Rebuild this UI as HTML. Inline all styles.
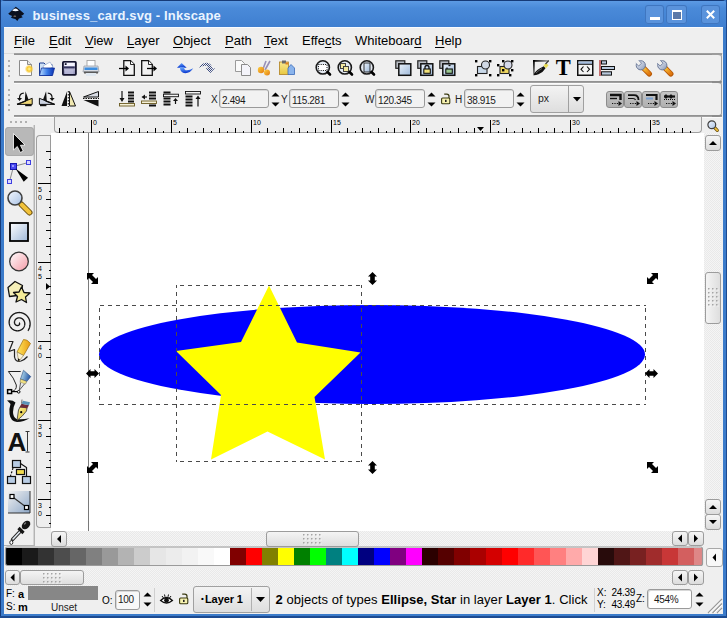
<!DOCTYPE html><html><head><meta charset="utf-8"><style>
html,body{margin:0;padding:0;width:727px;height:618px;overflow:hidden;background:#efefef;}
body{position:relative;font-family:"Liberation Sans",sans-serif;font-size:13px;color:#000;}
.t{position:absolute;white-space:nowrap;line-height:1;}
svg{overflow:visible}
</style></head><body>
<div style="position:absolute;left:0px;top:0px;width:727px;height:618px;background:#3b7bca;"></div>
<div style="position:absolute;left:4px;top:27px;width:719px;height:587px;background:#efefef;"></div>
<div style="position:absolute;left:0px;top:0px;width:727px;height:27px;background:linear-gradient(#163a78 0px,#163a78 1px,#5c9ae4 1px,#4a8ad9 8px,#3f7fd0 27px);border-radius:5px 5px 0 0;"></div>
<div style="position:absolute;left:0px;top:0px;width:1px;height:618px;background:#163a78;"></div>
<div style="position:absolute;left:726px;top:0px;width:1px;height:618px;background:#1c4a90;"></div>
<div style="position:absolute;left:0px;top:616px;width:727px;height:2px;background:#1c4a90;"></div>
<div class="t" style="left:32.5px;top:9px;font-weight:bold;font-size:13px;letter-spacing:0.15px;color:#eaf4ff;">business_card.svg - Inkscape</div>
<div style="position:absolute;left:644.5px;top:4.5px;width:19.5px;height:19.5px;background:#5a93dc;border-radius:3px;box-shadow:inset 0 0 0 1px #3f76c0;"></div>
<div style="position:absolute;left:666px;top:4.5px;width:20.5px;height:19.5px;background:#5a93dc;border-radius:3px;box-shadow:inset 0 0 0 1px #3f76c0;"></div>
<div style="position:absolute;left:700.5px;top:4.5px;width:19.5px;height:19.5px;background:#5a93dc;border-radius:3px;box-shadow:inset 0 0 0 1px #3f76c0;"></div>
<div style="position:absolute;left:650px;top:17px;width:9.5px;height:2.5px;background:#fff;"></div>
<div style="position:absolute;left:672px;top:10px;width:9.5px;height:9.5px;border:1.6px solid #fff;border-top-width:2px;box-sizing:border-box;background:#5a78a8;"></div>
<svg style="position:absolute;left:706px;top:10px;" width="9" height="9" viewBox="0 0 9 9"><path d="M0.8,0.8 L8.2,8.2 M8.2,0.8 L0.8,8.2" stroke="#fff" stroke-width="2"/></svg>
<svg style="position:absolute;left:0px;top:0px;" width="30" height="27" viewBox="0 0 30 27"><path d="M15.8,6.8 Q19,9 22,11.8 L24.2,13.8 Q23,15.3 21.2,15.8 L22.8,17.3 Q20.5,18.2 19,18.6 L17.3,21 L15.3,19 Q13,18.5 10.8,17.5 L12.3,16 Q9.5,15 8.2,13.8 L11,11.3 Q13.5,8.8 15.8,6.8 Z" fill="#0a0f1e"/><path d="M12.2,10.8 Q15.5,6.2 18.8,10.8 Q15.5,11.6 12.2,10.8 Z" fill="#f4f8ff"/><ellipse cx="14.8" cy="16.2" rx="1.4" ry="0.6" fill="#8a7a6a"/></svg>
<div style="position:absolute;left:4px;top:27px;width:719px;height:1px;background:#f8fbff;"></div>
<div class="t" style="left:14px;top:34px;font-size:13px;"><span style="text-decoration:underline;text-underline-offset:1.5px;text-decoration-thickness:1px">F</span>ile</div>
<div class="t" style="left:49px;top:34px;font-size:13px;"><span style="text-decoration:underline;text-underline-offset:1.5px;text-decoration-thickness:1px">E</span>dit</div>
<div class="t" style="left:85px;top:34px;font-size:13px;"><span style="text-decoration:underline;text-underline-offset:1.5px;text-decoration-thickness:1px">V</span>iew</div>
<div class="t" style="left:127px;top:34px;font-size:13px;"><span style="text-decoration:underline;text-underline-offset:1.5px;text-decoration-thickness:1px">L</span>ayer</div>
<div class="t" style="left:173px;top:34px;font-size:13px;"><span style="text-decoration:underline;text-underline-offset:1.5px;text-decoration-thickness:1px">O</span>bject</div>
<div class="t" style="left:225px;top:34px;font-size:13px;"><span style="text-decoration:underline;text-underline-offset:1.5px;text-decoration-thickness:1px">P</span>ath</div>
<div class="t" style="left:264px;top:34px;font-size:13px;"><span style="text-decoration:underline;text-underline-offset:1.5px;text-decoration-thickness:1px">T</span>ext</div>
<div class="t" style="left:302px;top:34px;font-size:13px;">Effe<span style="text-decoration:underline;text-underline-offset:1.5px;text-decoration-thickness:1px">c</span>ts</div>
<div class="t" style="left:355px;top:34px;font-size:13px;">Whiteboar<span style="text-decoration:underline;text-underline-offset:1.5px;text-decoration-thickness:1px">d</span></div>
<div class="t" style="left:435px;top:34px;font-size:13px;"><span style="text-decoration:underline;text-underline-offset:1.5px;text-decoration-thickness:1px">H</span>elp</div>
<div style="position:absolute;left:4px;top:53px;width:719px;height:1px;background:#b4b4b4;"></div>
<div style="position:absolute;left:4px;top:53px;width:719px;height:1px;background:#dcdcdc;"></div>
<div style="position:absolute;left:14px;top:53px;width:708px;height:2px;background:linear-gradient(#a8a8a8,#8a8a8a);"></div>
<div style="position:absolute;left:14px;top:81px;width:708px;height:2px;background:linear-gradient(#8a8a8a,#a8a8a8);"></div>
<div style="position:absolute;left:14px;top:83px;width:708px;height:1px;background:#fbfbfb;"></div>
<div style="position:absolute;left:14px;top:115px;width:708px;height:2px;background:linear-gradient(#8a8a8a,#a8a8a8);"></div>
<div style="position:absolute;left:14px;top:117px;width:708px;height:1px;background:#fbfbfb;"></div>
<div style="position:absolute;left:8px;top:60px;width:2px;height:2px;background:#b0b0b0;"></div>
<div style="position:absolute;left:8px;top:65px;width:2px;height:2px;background:#b0b0b0;"></div>
<div style="position:absolute;left:8px;top:70px;width:2px;height:2px;background:#b0b0b0;"></div>
<div style="position:absolute;left:8px;top:75px;width:2px;height:2px;background:#b0b0b0;"></div>
<div style="position:absolute;left:8px;top:89px;width:2px;height:2px;background:#b0b0b0;"></div>
<div style="position:absolute;left:8px;top:94px;width:2px;height:2px;background:#b0b0b0;"></div>
<div style="position:absolute;left:8px;top:99px;width:2px;height:2px;background:#b0b0b0;"></div>
<div style="position:absolute;left:8px;top:104px;width:2px;height:2px;background:#b0b0b0;"></div>
<div style="position:absolute;left:8px;top:109px;width:2px;height:2px;background:#b0b0b0;"></div>
<div style="position:absolute;left:10px;top:121px;width:2px;height:2px;background:#b0b0b0;"></div>
<div style="position:absolute;left:15px;top:121px;width:2px;height:2px;background:#b0b0b0;"></div>
<div style="position:absolute;left:20px;top:121px;width:2px;height:2px;background:#b0b0b0;"></div>
<div style="position:absolute;left:25px;top:121px;width:2px;height:2px;background:#b0b0b0;"></div>
<div style="position:absolute;left:54px;top:117px;width:648px;height:16px;background:#eeeeee;border:1px solid #a0a0a0;border-top:none;border-radius:0 0 4px 4px;box-sizing:border-box;"></div>
<svg style="position:absolute;left:0;top:0" width="727" height="618" font-family="Liberation Sans"><rect x="59" y="128" width="1" height="5"/><rect x="67" y="131" width="1" height="2"/><rect x="75" y="128" width="1" height="5"/><rect x="83" y="131" width="1" height="2"/><rect x="91" y="120" width="1" height="13"/><text x="93" y="125" font-size="7">0</text><rect x="99" y="131" width="1" height="2"/><rect x="107" y="128" width="1" height="5"/><rect x="115" y="131" width="1" height="2"/><rect x="123" y="128" width="1" height="5"/><rect x="131" y="131" width="1" height="2"/><rect x="139" y="128" width="1" height="5"/><rect x="147" y="131" width="1" height="2"/><rect x="155" y="128" width="1" height="5"/><rect x="163" y="131" width="1" height="2"/><rect x="171" y="120" width="1" height="13"/><text x="173" y="125" font-size="7">5</text><rect x="179" y="131" width="1" height="2"/><rect x="187" y="128" width="1" height="5"/><rect x="195" y="131" width="1" height="2"/><rect x="203" y="128" width="1" height="5"/><rect x="211" y="131" width="1" height="2"/><rect x="219" y="128" width="1" height="5"/><rect x="227" y="131" width="1" height="2"/><rect x="235" y="128" width="1" height="5"/><rect x="243" y="131" width="1" height="2"/><rect x="251" y="120" width="1" height="13"/><text x="253" y="125" font-size="7">10</text><rect x="259" y="131" width="1" height="2"/><rect x="267" y="128" width="1" height="5"/><rect x="275" y="131" width="1" height="2"/><rect x="283" y="128" width="1" height="5"/><rect x="291" y="131" width="1" height="2"/><rect x="299" y="128" width="1" height="5"/><rect x="307" y="131" width="1" height="2"/><rect x="315" y="128" width="1" height="5"/><rect x="323" y="131" width="1" height="2"/><rect x="331" y="120" width="1" height="13"/><text x="333" y="125" font-size="7">15</text><rect x="339" y="131" width="1" height="2"/><rect x="347" y="128" width="1" height="5"/><rect x="355" y="131" width="1" height="2"/><rect x="362" y="128" width="1" height="5"/><rect x="370" y="131" width="1" height="2"/><rect x="378" y="128" width="1" height="5"/><rect x="386" y="131" width="1" height="2"/><rect x="394" y="128" width="1" height="5"/><rect x="402" y="131" width="1" height="2"/><rect x="410" y="120" width="1" height="13"/><text x="412" y="125" font-size="7">20</text><rect x="418" y="131" width="1" height="2"/><rect x="426" y="128" width="1" height="5"/><rect x="434" y="131" width="1" height="2"/><rect x="442" y="128" width="1" height="5"/><rect x="450" y="131" width="1" height="2"/><rect x="458" y="128" width="1" height="5"/><rect x="466" y="131" width="1" height="2"/><rect x="474" y="128" width="1" height="5"/><rect x="482" y="131" width="1" height="2"/><rect x="490" y="120" width="1" height="13"/><text x="492" y="125" font-size="7">25</text><rect x="498" y="131" width="1" height="2"/><rect x="506" y="128" width="1" height="5"/><rect x="514" y="131" width="1" height="2"/><rect x="522" y="128" width="1" height="5"/><rect x="530" y="131" width="1" height="2"/><rect x="538" y="128" width="1" height="5"/><rect x="546" y="131" width="1" height="2"/><rect x="554" y="128" width="1" height="5"/><rect x="562" y="131" width="1" height="2"/><rect x="570" y="120" width="1" height="13"/><text x="572" y="125" font-size="7">30</text><rect x="578" y="131" width="1" height="2"/><rect x="586" y="128" width="1" height="5"/><rect x="594" y="131" width="1" height="2"/><rect x="602" y="128" width="1" height="5"/><rect x="610" y="131" width="1" height="2"/><rect x="618" y="128" width="1" height="5"/><rect x="626" y="131" width="1" height="2"/><rect x="634" y="128" width="1" height="5"/><rect x="642" y="131" width="1" height="2"/><rect x="650" y="120" width="1" height="13"/><text x="652" y="125" font-size="7">35</text><rect x="658" y="131" width="1" height="2"/><rect x="666" y="128" width="1" height="5"/><rect x="674" y="131" width="1" height="2"/><rect x="682" y="128" width="1" height="5"/><rect x="690" y="131" width="1" height="2"/><path d="M477 127 L484 127 L480.5 131 Z"/></svg>
<div style="position:absolute;left:36px;top:135px;width:15px;height:393px;background:#eeeeee;border:1px solid #a0a0a0;border-right:none;border-radius:4px 0 0 4px;box-sizing:border-box;"></div>
<div style="position:absolute;left:50px;top:135px;width:1px;height:393px;background:#9a9a9a;"></div>
<svg style="position:absolute;left:0;top:0" width="727" height="618" font-family="Liberation Sans"><rect x="46" y="151" width="5" height="1"/><rect x="49" y="159" width="2" height="1"/><rect x="46" y="167" width="5" height="1"/><rect x="49" y="175" width="2" height="1"/><rect x="38" y="183" width="13" height="1"/><text x="38" y="192" font-size="7">5</text><text x="38" y="200" font-size="7">0</text><rect x="49" y="191" width="2" height="1"/><rect x="46" y="199" width="5" height="1"/><rect x="49" y="207" width="2" height="1"/><rect x="46" y="215" width="5" height="1"/><rect x="49" y="222" width="2" height="1"/><rect x="46" y="230" width="5" height="1"/><rect x="49" y="238" width="2" height="1"/><rect x="46" y="246" width="5" height="1"/><rect x="49" y="254" width="2" height="1"/><rect x="38" y="262" width="13" height="1"/><text x="38" y="271" font-size="7">4</text><text x="38" y="279" font-size="7">5</text><rect x="49" y="270" width="2" height="1"/><rect x="46" y="278" width="5" height="1"/><rect x="49" y="286" width="2" height="1"/><rect x="46" y="294" width="5" height="1"/><rect x="49" y="302" width="2" height="1"/><rect x="46" y="309" width="5" height="1"/><rect x="49" y="317" width="2" height="1"/><rect x="46" y="325" width="5" height="1"/><rect x="49" y="333" width="2" height="1"/><rect x="38" y="341" width="13" height="1"/><text x="38" y="350" font-size="7">4</text><text x="38" y="358" font-size="7">0</text><rect x="49" y="349" width="2" height="1"/><rect x="46" y="357" width="5" height="1"/><rect x="49" y="365" width="2" height="1"/><rect x="46" y="373" width="5" height="1"/><rect x="49" y="380" width="2" height="1"/><rect x="46" y="388" width="5" height="1"/><rect x="49" y="396" width="2" height="1"/><rect x="46" y="404" width="5" height="1"/><rect x="49" y="412" width="2" height="1"/><rect x="38" y="420" width="13" height="1"/><text x="38" y="429" font-size="7">3</text><text x="38" y="437" font-size="7">5</text><rect x="49" y="428" width="2" height="1"/><rect x="46" y="436" width="5" height="1"/><rect x="49" y="444" width="2" height="1"/><rect x="46" y="452" width="5" height="1"/><rect x="49" y="460" width="2" height="1"/><rect x="46" y="467" width="5" height="1"/><rect x="49" y="475" width="2" height="1"/><rect x="46" y="483" width="5" height="1"/><rect x="49" y="491" width="2" height="1"/><rect x="38" y="499" width="13" height="1"/><text x="38" y="508" font-size="7">3</text><text x="38" y="516" font-size="7">0</text><rect x="49" y="507" width="2" height="1"/><rect x="46" y="515" width="5" height="1"/><rect x="49" y="523" width="2" height="1"/><path d="M46 283 L46 290 L50 286.5 Z"/></svg>
<div style="position:absolute;left:51px;top:133px;width:653px;height:398px;background:#ffffff;"></div>
<div style="position:absolute;left:88px;top:133px;width:1px;height:398px;background:#7a7a7a;"></div>
<svg style="position:absolute;left:0;top:0" width="727" height="618"><ellipse cx="372" cy="354.5" rx="273" ry="49.5" fill="#0000ff"/><path d="M269,285.5 L297,342.5 L360.5,352.5 L314.5,397 L325,459.5 L267.5,431.5 L211,459.5 L221,395 L176,351 L241,342 Z" fill="#ffff00"/><rect x="100" y="305" width="4" height="1" fill="#4a4a4a"/><rect x="108" y="305" width="4" height="1" fill="#4a4a4a"/><rect x="116" y="305" width="4" height="1" fill="#4a4a4a"/><rect x="124" y="305" width="4" height="1" fill="#4a4a4a"/><rect x="132" y="305" width="4" height="1" fill="#4a4a4a"/><rect x="140" y="305" width="4" height="1" fill="#4a4a4a"/><rect x="148" y="305" width="4" height="1" fill="#4a4a4a"/><rect x="156" y="305" width="4" height="1" fill="#4a4a4a"/><rect x="164" y="305" width="4" height="1" fill="#4a4a4a"/><rect x="172" y="305" width="4" height="1" fill="#4a4a4a"/><rect x="180" y="305" width="4" height="1" fill="#4a4a4a"/><rect x="188" y="305" width="4" height="1" fill="#4a4a4a"/><rect x="196" y="305" width="4" height="1" fill="#4a4a4a"/><rect x="204" y="305" width="4" height="1" fill="#4a4a4a"/><rect x="212" y="305" width="4" height="1" fill="#4a4a4a"/><rect x="220" y="305" width="4" height="1" fill="#4a4a4a"/><rect x="228" y="305" width="4" height="1" fill="#4a4a4a"/><rect x="236" y="305" width="4" height="1" fill="#4a4a4a"/><rect x="244" y="305" width="4" height="1" fill="#4a4a4a"/><rect x="252" y="305" width="4" height="1" fill="#4a4a4a"/><rect x="260" y="305" width="4" height="1" fill="#4a4a4a"/><rect x="268" y="305" width="4" height="1" fill="#4a4a4a"/><rect x="276" y="305" width="4" height="1" fill="#4a4a4a"/><rect x="284" y="305" width="4" height="1" fill="#4a4a4a"/><rect x="292" y="305" width="4" height="1" fill="#4a4a4a"/><rect x="300" y="305" width="4" height="1" fill="#4a4a4a"/><rect x="308" y="305" width="4" height="1" fill="#4a4a4a"/><rect x="316" y="305" width="4" height="1" fill="#4a4a4a"/><rect x="324" y="305" width="4" height="1" fill="#4a4a4a"/><rect x="332" y="305" width="4" height="1" fill="#4a4a4a"/><rect x="340" y="305" width="4" height="1" fill="#4a4a4a"/><rect x="348" y="305" width="4" height="1" fill="#4a4a4a"/><rect x="356" y="305" width="4" height="1" fill="#4a4a4a"/><rect x="364" y="305" width="4" height="1" fill="#4a4a4a"/><rect x="372" y="305" width="4" height="1" fill="#4a4a4a"/><rect x="380" y="305" width="4" height="1" fill="#4a4a4a"/><rect x="388" y="305" width="4" height="1" fill="#4a4a4a"/><rect x="396" y="305" width="4" height="1" fill="#4a4a4a"/><rect x="404" y="305" width="4" height="1" fill="#4a4a4a"/><rect x="412" y="305" width="4" height="1" fill="#4a4a4a"/><rect x="420" y="305" width="4" height="1" fill="#4a4a4a"/><rect x="428" y="305" width="4" height="1" fill="#4a4a4a"/><rect x="436" y="305" width="4" height="1" fill="#4a4a4a"/><rect x="444" y="305" width="4" height="1" fill="#4a4a4a"/><rect x="452" y="305" width="4" height="1" fill="#4a4a4a"/><rect x="460" y="305" width="4" height="1" fill="#4a4a4a"/><rect x="468" y="305" width="4" height="1" fill="#4a4a4a"/><rect x="476" y="305" width="4" height="1" fill="#4a4a4a"/><rect x="484" y="305" width="4" height="1" fill="#4a4a4a"/><rect x="492" y="305" width="4" height="1" fill="#4a4a4a"/><rect x="500" y="305" width="4" height="1" fill="#4a4a4a"/><rect x="508" y="305" width="4" height="1" fill="#4a4a4a"/><rect x="516" y="305" width="4" height="1" fill="#4a4a4a"/><rect x="524" y="305" width="4" height="1" fill="#4a4a4a"/><rect x="532" y="305" width="4" height="1" fill="#4a4a4a"/><rect x="540" y="305" width="4" height="1" fill="#4a4a4a"/><rect x="548" y="305" width="4" height="1" fill="#4a4a4a"/><rect x="556" y="305" width="4" height="1" fill="#4a4a4a"/><rect x="564" y="305" width="4" height="1" fill="#4a4a4a"/><rect x="572" y="305" width="4" height="1" fill="#4a4a4a"/><rect x="580" y="305" width="4" height="1" fill="#4a4a4a"/><rect x="588" y="305" width="4" height="1" fill="#4a4a4a"/><rect x="596" y="305" width="4" height="1" fill="#4a4a4a"/><rect x="604" y="305" width="4" height="1" fill="#4a4a4a"/><rect x="612" y="305" width="4" height="1" fill="#4a4a4a"/><rect x="620" y="305" width="4" height="1" fill="#4a4a4a"/><rect x="628" y="305" width="4" height="1" fill="#4a4a4a"/><rect x="636" y="305" width="4" height="1" fill="#4a4a4a"/><rect x="644" y="305" width="2" height="1" fill="#4a4a4a"/><rect x="100" y="404" width="4" height="1" fill="#4a4a4a"/><rect x="108" y="404" width="4" height="1" fill="#4a4a4a"/><rect x="116" y="404" width="4" height="1" fill="#4a4a4a"/><rect x="124" y="404" width="4" height="1" fill="#4a4a4a"/><rect x="132" y="404" width="4" height="1" fill="#4a4a4a"/><rect x="140" y="404" width="4" height="1" fill="#4a4a4a"/><rect x="148" y="404" width="4" height="1" fill="#4a4a4a"/><rect x="156" y="404" width="4" height="1" fill="#4a4a4a"/><rect x="164" y="404" width="4" height="1" fill="#4a4a4a"/><rect x="172" y="404" width="4" height="1" fill="#4a4a4a"/><rect x="180" y="404" width="4" height="1" fill="#4a4a4a"/><rect x="188" y="404" width="4" height="1" fill="#4a4a4a"/><rect x="196" y="404" width="4" height="1" fill="#4a4a4a"/><rect x="204" y="404" width="4" height="1" fill="#4a4a4a"/><rect x="212" y="404" width="4" height="1" fill="#4a4a4a"/><rect x="220" y="404" width="4" height="1" fill="#4a4a4a"/><rect x="228" y="404" width="4" height="1" fill="#4a4a4a"/><rect x="236" y="404" width="4" height="1" fill="#4a4a4a"/><rect x="244" y="404" width="4" height="1" fill="#4a4a4a"/><rect x="252" y="404" width="4" height="1" fill="#4a4a4a"/><rect x="260" y="404" width="4" height="1" fill="#4a4a4a"/><rect x="268" y="404" width="4" height="1" fill="#4a4a4a"/><rect x="276" y="404" width="4" height="1" fill="#4a4a4a"/><rect x="284" y="404" width="4" height="1" fill="#4a4a4a"/><rect x="292" y="404" width="4" height="1" fill="#4a4a4a"/><rect x="300" y="404" width="4" height="1" fill="#4a4a4a"/><rect x="308" y="404" width="4" height="1" fill="#4a4a4a"/><rect x="316" y="404" width="4" height="1" fill="#4a4a4a"/><rect x="324" y="404" width="4" height="1" fill="#4a4a4a"/><rect x="332" y="404" width="4" height="1" fill="#4a4a4a"/><rect x="340" y="404" width="4" height="1" fill="#4a4a4a"/><rect x="348" y="404" width="4" height="1" fill="#4a4a4a"/><rect x="356" y="404" width="4" height="1" fill="#4a4a4a"/><rect x="364" y="404" width="4" height="1" fill="#4a4a4a"/><rect x="372" y="404" width="4" height="1" fill="#4a4a4a"/><rect x="380" y="404" width="4" height="1" fill="#4a4a4a"/><rect x="388" y="404" width="4" height="1" fill="#4a4a4a"/><rect x="396" y="404" width="4" height="1" fill="#4a4a4a"/><rect x="404" y="404" width="4" height="1" fill="#4a4a4a"/><rect x="412" y="404" width="4" height="1" fill="#4a4a4a"/><rect x="420" y="404" width="4" height="1" fill="#4a4a4a"/><rect x="428" y="404" width="4" height="1" fill="#4a4a4a"/><rect x="436" y="404" width="4" height="1" fill="#4a4a4a"/><rect x="444" y="404" width="4" height="1" fill="#4a4a4a"/><rect x="452" y="404" width="4" height="1" fill="#4a4a4a"/><rect x="460" y="404" width="4" height="1" fill="#4a4a4a"/><rect x="468" y="404" width="4" height="1" fill="#4a4a4a"/><rect x="476" y="404" width="4" height="1" fill="#4a4a4a"/><rect x="484" y="404" width="4" height="1" fill="#4a4a4a"/><rect x="492" y="404" width="4" height="1" fill="#4a4a4a"/><rect x="500" y="404" width="4" height="1" fill="#4a4a4a"/><rect x="508" y="404" width="4" height="1" fill="#4a4a4a"/><rect x="516" y="404" width="4" height="1" fill="#4a4a4a"/><rect x="524" y="404" width="4" height="1" fill="#4a4a4a"/><rect x="532" y="404" width="4" height="1" fill="#4a4a4a"/><rect x="540" y="404" width="4" height="1" fill="#4a4a4a"/><rect x="548" y="404" width="4" height="1" fill="#4a4a4a"/><rect x="556" y="404" width="4" height="1" fill="#4a4a4a"/><rect x="564" y="404" width="4" height="1" fill="#4a4a4a"/><rect x="572" y="404" width="4" height="1" fill="#4a4a4a"/><rect x="580" y="404" width="4" height="1" fill="#4a4a4a"/><rect x="588" y="404" width="4" height="1" fill="#4a4a4a"/><rect x="596" y="404" width="4" height="1" fill="#4a4a4a"/><rect x="604" y="404" width="4" height="1" fill="#4a4a4a"/><rect x="612" y="404" width="4" height="1" fill="#4a4a4a"/><rect x="620" y="404" width="4" height="1" fill="#4a4a4a"/><rect x="628" y="404" width="4" height="1" fill="#4a4a4a"/><rect x="636" y="404" width="4" height="1" fill="#4a4a4a"/><rect x="644" y="404" width="2" height="1" fill="#4a4a4a"/><rect x="99" y="308" width="1" height="4" fill="#4a4a4a"/><rect x="99" y="316" width="1" height="4" fill="#4a4a4a"/><rect x="99" y="324" width="1" height="4" fill="#4a4a4a"/><rect x="99" y="332" width="1" height="4" fill="#4a4a4a"/><rect x="99" y="340" width="1" height="4" fill="#4a4a4a"/><rect x="99" y="348" width="1" height="4" fill="#4a4a4a"/><rect x="99" y="356" width="1" height="4" fill="#4a4a4a"/><rect x="99" y="364" width="1" height="4" fill="#4a4a4a"/><rect x="99" y="372" width="1" height="4" fill="#4a4a4a"/><rect x="99" y="380" width="1" height="4" fill="#4a4a4a"/><rect x="99" y="388" width="1" height="4" fill="#4a4a4a"/><rect x="99" y="396" width="1" height="4" fill="#4a4a4a"/><rect x="99" y="404" width="1" height="1" fill="#4a4a4a"/><rect x="645" y="308" width="1" height="4" fill="#4a4a4a"/><rect x="645" y="316" width="1" height="4" fill="#4a4a4a"/><rect x="645" y="324" width="1" height="4" fill="#4a4a4a"/><rect x="645" y="332" width="1" height="4" fill="#4a4a4a"/><rect x="645" y="340" width="1" height="4" fill="#4a4a4a"/><rect x="645" y="348" width="1" height="4" fill="#4a4a4a"/><rect x="645" y="356" width="1" height="4" fill="#4a4a4a"/><rect x="645" y="364" width="1" height="4" fill="#4a4a4a"/><rect x="645" y="372" width="1" height="4" fill="#4a4a4a"/><rect x="645" y="380" width="1" height="4" fill="#4a4a4a"/><rect x="645" y="388" width="1" height="4" fill="#4a4a4a"/><rect x="645" y="396" width="1" height="4" fill="#4a4a4a"/><rect x="645" y="404" width="1" height="1" fill="#4a4a4a"/><rect x="180" y="285" width="4" height="1" fill="#4a4a4a"/><rect x="188" y="285" width="4" height="1" fill="#4a4a4a"/><rect x="196" y="285" width="4" height="1" fill="#4a4a4a"/><rect x="204" y="285" width="4" height="1" fill="#4a4a4a"/><rect x="212" y="285" width="4" height="1" fill="#4a4a4a"/><rect x="220" y="285" width="4" height="1" fill="#4a4a4a"/><rect x="228" y="285" width="4" height="1" fill="#4a4a4a"/><rect x="236" y="285" width="4" height="1" fill="#4a4a4a"/><rect x="244" y="285" width="4" height="1" fill="#4a4a4a"/><rect x="252" y="285" width="4" height="1" fill="#4a4a4a"/><rect x="260" y="285" width="4" height="1" fill="#4a4a4a"/><rect x="268" y="285" width="4" height="1" fill="#4a4a4a"/><rect x="276" y="285" width="4" height="1" fill="#4a4a4a"/><rect x="284" y="285" width="4" height="1" fill="#4a4a4a"/><rect x="292" y="285" width="4" height="1" fill="#4a4a4a"/><rect x="300" y="285" width="4" height="1" fill="#4a4a4a"/><rect x="308" y="285" width="4" height="1" fill="#4a4a4a"/><rect x="316" y="285" width="4" height="1" fill="#4a4a4a"/><rect x="324" y="285" width="4" height="1" fill="#4a4a4a"/><rect x="332" y="285" width="4" height="1" fill="#4a4a4a"/><rect x="340" y="285" width="4" height="1" fill="#4a4a4a"/><rect x="348" y="285" width="4" height="1" fill="#4a4a4a"/><rect x="356" y="285" width="4" height="1" fill="#4a4a4a"/><rect x="180" y="461" width="4" height="1" fill="#4a4a4a"/><rect x="188" y="461" width="4" height="1" fill="#4a4a4a"/><rect x="196" y="461" width="4" height="1" fill="#4a4a4a"/><rect x="204" y="461" width="4" height="1" fill="#4a4a4a"/><rect x="212" y="461" width="4" height="1" fill="#4a4a4a"/><rect x="220" y="461" width="4" height="1" fill="#4a4a4a"/><rect x="228" y="461" width="4" height="1" fill="#4a4a4a"/><rect x="236" y="461" width="4" height="1" fill="#4a4a4a"/><rect x="244" y="461" width="4" height="1" fill="#4a4a4a"/><rect x="252" y="461" width="4" height="1" fill="#4a4a4a"/><rect x="260" y="461" width="4" height="1" fill="#4a4a4a"/><rect x="268" y="461" width="4" height="1" fill="#4a4a4a"/><rect x="276" y="461" width="4" height="1" fill="#4a4a4a"/><rect x="284" y="461" width="4" height="1" fill="#4a4a4a"/><rect x="292" y="461" width="4" height="1" fill="#4a4a4a"/><rect x="300" y="461" width="4" height="1" fill="#4a4a4a"/><rect x="308" y="461" width="4" height="1" fill="#4a4a4a"/><rect x="316" y="461" width="4" height="1" fill="#4a4a4a"/><rect x="324" y="461" width="4" height="1" fill="#4a4a4a"/><rect x="332" y="461" width="4" height="1" fill="#4a4a4a"/><rect x="340" y="461" width="4" height="1" fill="#4a4a4a"/><rect x="348" y="461" width="4" height="1" fill="#4a4a4a"/><rect x="356" y="461" width="4" height="1" fill="#4a4a4a"/><rect x="176" y="285" width="1" height="3" fill="#4a4a4a"/><rect x="176" y="292" width="1" height="4" fill="#4a4a4a"/><rect x="176" y="300" width="1" height="4" fill="#4a4a4a"/><rect x="176" y="308" width="1" height="4" fill="#4a4a4a"/><rect x="176" y="316" width="1" height="4" fill="#4a4a4a"/><rect x="176" y="324" width="1" height="4" fill="#4a4a4a"/><rect x="176" y="332" width="1" height="4" fill="#4a4a4a"/><rect x="176" y="340" width="1" height="4" fill="#4a4a4a"/><rect x="176" y="348" width="1" height="4" fill="#4a4a4a"/><rect x="176" y="356" width="1" height="4" fill="#4a4a4a"/><rect x="176" y="364" width="1" height="4" fill="#4a4a4a"/><rect x="176" y="372" width="1" height="4" fill="#4a4a4a"/><rect x="176" y="380" width="1" height="4" fill="#4a4a4a"/><rect x="176" y="388" width="1" height="4" fill="#4a4a4a"/><rect x="176" y="396" width="1" height="4" fill="#4a4a4a"/><rect x="176" y="404" width="1" height="4" fill="#4a4a4a"/><rect x="176" y="412" width="1" height="4" fill="#4a4a4a"/><rect x="176" y="420" width="1" height="4" fill="#4a4a4a"/><rect x="176" y="428" width="1" height="4" fill="#4a4a4a"/><rect x="176" y="436" width="1" height="4" fill="#4a4a4a"/><rect x="176" y="444" width="1" height="4" fill="#4a4a4a"/><rect x="176" y="452" width="1" height="4" fill="#4a4a4a"/><rect x="176" y="460" width="1" height="2" fill="#4a4a4a"/><rect x="361" y="285" width="1" height="3" fill="#4a4a4a"/><rect x="361" y="292" width="1" height="4" fill="#4a4a4a"/><rect x="361" y="300" width="1" height="4" fill="#4a4a4a"/><rect x="361" y="308" width="1" height="4" fill="#4a4a4a"/><rect x="361" y="316" width="1" height="4" fill="#4a4a4a"/><rect x="361" y="324" width="1" height="4" fill="#4a4a4a"/><rect x="361" y="332" width="1" height="4" fill="#4a4a4a"/><rect x="361" y="340" width="1" height="4" fill="#4a4a4a"/><rect x="361" y="348" width="1" height="4" fill="#4a4a4a"/><rect x="361" y="356" width="1" height="4" fill="#4a4a4a"/><rect x="361" y="364" width="1" height="4" fill="#4a4a4a"/><rect x="361" y="372" width="1" height="4" fill="#4a4a4a"/><rect x="361" y="380" width="1" height="4" fill="#4a4a4a"/><rect x="361" y="388" width="1" height="4" fill="#4a4a4a"/><rect x="361" y="396" width="1" height="4" fill="#4a4a4a"/><rect x="361" y="404" width="1" height="4" fill="#4a4a4a"/><rect x="361" y="412" width="1" height="4" fill="#4a4a4a"/><rect x="361" y="420" width="1" height="4" fill="#4a4a4a"/><rect x="361" y="428" width="1" height="4" fill="#4a4a4a"/><rect x="361" y="436" width="1" height="4" fill="#4a4a4a"/><rect x="361" y="444" width="1" height="4" fill="#4a4a4a"/><rect x="361" y="452" width="1" height="4" fill="#4a4a4a"/><rect x="361" y="460" width="1" height="2" fill="#4a4a4a"/><path transform="translate(87,273) " d="M0,0 L7,0 L5,2 L9,6 L11,4 L11,11 L4,11 L6,9 L2,5 L0,7 Z"/><path transform="translate(658,273) scale(-1,1)" d="M0,0 L7,0 L5,2 L9,6 L11,4 L11,11 L4,11 L6,9 L2,5 L0,7 Z"/><path transform="translate(87,473) scale(1,-1)" d="M0,0 L7,0 L5,2 L9,6 L11,4 L11,11 L4,11 L6,9 L2,5 L0,7 Z"/><path transform="translate(658,473) scale(-1,-1)" d="M0,0 L7,0 L5,2 L9,6 L11,4 L11,11 L4,11 L6,9 L2,5 L0,7 Z"/><path transform="translate(645,369) " d="M0,4.5 L4.5,0 L4.5,2.3 L8.5,2.3 L8.5,0 L13,4.5 L8.5,9 L8.5,6.7 L4.5,6.7 L4.5,9 Z"/><path transform="translate(86,369) " d="M0,4.5 L4.5,0 L4.5,2.3 L8.5,2.3 L8.5,0 L13,4.5 L8.5,9 L8.5,6.7 L4.5,6.7 L4.5,9 Z"/><path transform="translate(368,272) " d="M4.5,0 L9,4.5 L6.8,4.5 L6.8,8.5 L9,8.5 L4.5,13 L0,8.5 L2.2,8.5 L2.2,4.5 L0,4.5 Z"/><path transform="translate(368,461) " d="M4.5,0 L9,4.5 L6.8,4.5 L6.8,8.5 L9,8.5 L4.5,13 L0,8.5 L2.2,8.5 L2.2,4.5 L0,4.5 Z"/></svg>
<div style="position:absolute;left:704px;top:133px;width:17px;height:398px;background:repeating-conic-gradient(#e9e9e9 0 25%,#f5f5f5 0 50%) 0 0/2px 2px;"></div>
<div style="position:absolute;left:705px;top:135px;width:16px;height:16px;background:linear-gradient(#f6f6f6,#dcdcdc);border:1px solid #9c9c9c;border-radius:3px;box-sizing:border-box;"></div><svg style="position:absolute;left:0;top:0" width="727" height="618"><path d="M709.0,145.0 L717.0,145.0 L713.0,141.0 Z"/></svg>
<div style="position:absolute;left:705px;top:499px;width:16px;height:16px;background:linear-gradient(#f6f6f6,#dcdcdc);border:1px solid #9c9c9c;border-radius:3px;box-sizing:border-box;"></div><svg style="position:absolute;left:0;top:0" width="727" height="618"><path d="M709.0,509.0 L717.0,509.0 L713.0,505.0 Z"/></svg>
<div style="position:absolute;left:705px;top:514px;width:16px;height:16px;background:linear-gradient(#f6f6f6,#dcdcdc);border:1px solid #9c9c9c;border-radius:3px;box-sizing:border-box;"></div><svg style="position:absolute;left:0;top:0" width="727" height="618"><path d="M709.0,520.0 L717.0,520.0 L713.0,524.0 Z"/></svg>
<div style="position:absolute;left:705px;top:272px;width:16px;height:52px;background:linear-gradient(90deg,#f4f4f4,#dedede);border:1px solid #9c9c9c;border-radius:3px;box-sizing:border-box;"></div>
<div style="position:absolute;left:51px;top:531px;width:653px;height:16px;background:repeating-conic-gradient(#e9e9e9 0 25%,#f5f5f5 0 50%) 0 0/2px 2px;"></div>
<div style="position:absolute;left:51px;top:531px;width:16px;height:16px;background:linear-gradient(#f6f6f6,#dcdcdc);border:1px solid #9c9c9c;border-radius:3px;box-sizing:border-box;"></div><svg style="position:absolute;left:0;top:0" width="727" height="618"><path d="M61.0,535.0 L61.0,543.0 L57.0,539.0 Z"/></svg>
<div style="position:absolute;left:672px;top:531px;width:16px;height:15px;background:linear-gradient(#f6f6f6,#dcdcdc);border:1px solid #9c9c9c;border-radius:3px;box-sizing:border-box;"></div><svg style="position:absolute;left:0;top:0" width="727" height="618"><path d="M682.0,534.5 L682.0,542.5 L678.0,538.5 Z"/></svg>
<div style="position:absolute;left:688px;top:531px;width:16px;height:15px;background:linear-gradient(#f6f6f6,#dcdcdc);border:1px solid #9c9c9c;border-radius:3px;box-sizing:border-box;"></div><svg style="position:absolute;left:0;top:0" width="727" height="618"><path d="M694.0,534.5 L694.0,542.5 L698.0,538.5 Z"/></svg>
<div style="position:absolute;left:266px;top:531px;width:93px;height:16px;background:linear-gradient(#f4f4f4,#dedede);border:1px solid #9c9c9c;border-radius:3px;box-sizing:border-box;"></div>
<svg style="position:absolute;left:0;top:0" width="727" height="618"><svg x="0" y="0" width="702" height="618" style="overflow:hidden"><rect x="6" y="548" width="16" height="17" fill="#000000"/><rect x="22" y="548" width="16" height="17" fill="#1a1a1a"/><rect x="38" y="548" width="16" height="17" fill="#333333"/><rect x="54" y="548" width="16" height="17" fill="#4d4d4d"/><rect x="70" y="548" width="16" height="17" fill="#666666"/><rect x="86" y="548" width="16" height="17" fill="#808080"/><rect x="102" y="548" width="16" height="17" fill="#999999"/><rect x="118" y="548" width="16" height="17" fill="#b3b3b3"/><rect x="134" y="548" width="16" height="17" fill="#cccccc"/><rect x="150" y="548" width="16" height="17" fill="#e6e6e6"/><rect x="166" y="548" width="16" height="17" fill="#ececec"/><rect x="182" y="548" width="16" height="17" fill="#f2f2f2"/><rect x="198" y="548" width="16" height="17" fill="#f9f9f9"/><rect x="214" y="548" width="16" height="17" fill="#ffffff"/><rect x="230" y="548" width="16" height="17" fill="#800000"/><rect x="246" y="548" width="16" height="17" fill="#ff0000"/><rect x="262" y="548" width="16" height="17" fill="#808000"/><rect x="278" y="548" width="16" height="17" fill="#ffff00"/><rect x="294" y="548" width="16" height="17" fill="#008000"/><rect x="310" y="548" width="16" height="17" fill="#00ff00"/><rect x="326" y="548" width="16" height="17" fill="#008080"/><rect x="342" y="548" width="16" height="17" fill="#00ffff"/><rect x="358" y="548" width="16" height="17" fill="#000080"/><rect x="374" y="548" width="16" height="17" fill="#0000ff"/><rect x="390" y="548" width="16" height="17" fill="#800080"/><rect x="406" y="548" width="16" height="17" fill="#ff00ff"/><rect x="422" y="548" width="16" height="17" fill="#2b0000"/><rect x="438" y="548" width="16" height="17" fill="#550000"/><rect x="454" y="548" width="16" height="17" fill="#800000"/><rect x="470" y="548" width="16" height="17" fill="#aa0000"/><rect x="486" y="548" width="16" height="17" fill="#d40000"/><rect x="502" y="548" width="16" height="17" fill="#ff0000"/><rect x="518" y="548" width="16" height="17" fill="#ff2a2a"/><rect x="534" y="548" width="16" height="17" fill="#ff5555"/><rect x="550" y="548" width="16" height="17" fill="#ff8080"/><rect x="566" y="548" width="16" height="17" fill="#ffaaaa"/><rect x="582" y="548" width="16" height="17" fill="#ffd5d5"/><rect x="598" y="548" width="16" height="17" fill="#280b0b"/><rect x="614" y="548" width="16" height="17" fill="#501616"/><rect x="630" y="548" width="16" height="17" fill="#782121"/><rect x="646" y="548" width="16" height="17" fill="#a02c2c"/><rect x="662" y="548" width="16" height="17" fill="#c83737"/><rect x="678" y="548" width="16" height="17" fill="#d35f5f"/><rect x="694" y="548" width="16" height="17" fill="#de8787"/></svg><rect x="5.5" y="547" width="697" height="18.5" rx="2" fill="none" stroke="#9a9a9a" stroke-width="1.2"/></svg>
<div style="position:absolute;left:706px;top:548px;width:17px;height:19px;background:#f8f8f8;border:1px solid #a8a8a8;border-radius:3px;box-sizing:border-box;"></div>
<svg style="position:absolute;left:712px;top:553px" width="5" height="9"><path d="M4,0.5 V8.5 L0.5,4.5 Z"/></svg>
<div style="position:absolute;left:5px;top:569px;width:698px;height:17px;background:repeating-conic-gradient(#e9e9e9 0 25%,#f5f5f5 0 50%) 0 0/2px 2px;"></div>
<div style="position:absolute;left:5px;top:570px;width:15px;height:15px;background:linear-gradient(#f6f6f6,#dcdcdc);border:1px solid #9c9c9c;border-radius:3px;box-sizing:border-box;"></div><svg style="position:absolute;left:0;top:0" width="727" height="618"><path d="M14.5,573.5 L14.5,581.5 L10.5,577.5 Z"/></svg>
<div style="position:absolute;left:20px;top:570px;width:64px;height:15px;background:linear-gradient(#f4f4f4,#dedede);border:1px solid #9c9c9c;border-radius:3px;box-sizing:border-box;"></div>
<div style="position:absolute;left:672px;top:570px;width:16px;height:15px;background:linear-gradient(#f6f6f6,#dcdcdc);border:1px solid #9c9c9c;border-radius:3px;box-sizing:border-box;"></div><svg style="position:absolute;left:0;top:0" width="727" height="618"><path d="M682.0,573.5 L682.0,581.5 L678.0,577.5 Z"/></svg>
<div style="position:absolute;left:688px;top:570px;width:16px;height:15px;background:linear-gradient(#f6f6f6,#dcdcdc);border:1px solid #9c9c9c;border-radius:3px;box-sizing:border-box;"></div><svg style="position:absolute;left:0;top:0" width="727" height="618"><path d="M694.0,573.5 L694.0,581.5 L698.0,577.5 Z"/></svg>
<div class="t" style="left:211px;top:95px;font-size:10px;color:#222;">X</div>
<div style="position:absolute;left:219px;top:89px;width:50px;height:19px;background:#f2f2f2;border:1px solid #9a9a9a;border-radius:3px;box-sizing:border-box;box-shadow:inset 1px 1px 0 #d8d8d8;"></div><div class="t" style="left:222px;top:95.5px;font-size:10px;letter-spacing:-0.35px;color:#1a1a1a;">2.494</div>
<svg style="position:absolute;left:271px;top:92px" width="9" height="15"><path d="M0.5,4.5 L8.5,4.5 L4.5,0.5 Z"/><path d="M0.5,10.5 L8.5,10.5 L4.5,14.5 Z"/></svg>
<div class="t" style="left:281px;top:95px;font-size:10px;color:#222;">Y</div>
<div style="position:absolute;left:289px;top:89px;width:50px;height:19px;background:#f2f2f2;border:1px solid #9a9a9a;border-radius:3px;box-sizing:border-box;box-shadow:inset 1px 1px 0 #d8d8d8;"></div><div class="t" style="left:292px;top:95.5px;font-size:10px;letter-spacing:-0.35px;color:#1a1a1a;">115.281</div>
<svg style="position:absolute;left:341px;top:92px" width="9" height="15"><path d="M0.5,4.5 L8.5,4.5 L4.5,0.5 Z"/><path d="M0.5,10.5 L8.5,10.5 L4.5,14.5 Z"/></svg>
<div class="t" style="left:365px;top:95px;font-size:10px;color:#222;">W</div>
<div style="position:absolute;left:375px;top:89px;width:50px;height:19px;background:#f2f2f2;border:1px solid #9a9a9a;border-radius:3px;box-sizing:border-box;box-shadow:inset 1px 1px 0 #d8d8d8;"></div><div class="t" style="left:378px;top:95.5px;font-size:10px;letter-spacing:-0.35px;color:#1a1a1a;">120.345</div>
<svg style="position:absolute;left:427px;top:92px" width="9" height="15"><path d="M0.5,4.5 L8.5,4.5 L4.5,0.5 Z"/><path d="M0.5,10.5 L8.5,10.5 L4.5,14.5 Z"/></svg>
<div class="t" style="left:455px;top:95px;font-size:10px;color:#222;">H</div>
<div style="position:absolute;left:464px;top:89px;width:50px;height:19px;background:#f2f2f2;border:1px solid #9a9a9a;border-radius:3px;box-sizing:border-box;box-shadow:inset 1px 1px 0 #d8d8d8;"></div><div class="t" style="left:467px;top:95.5px;font-size:10px;letter-spacing:-0.35px;color:#1a1a1a;">38.915</div>
<svg style="position:absolute;left:516px;top:92px" width="9" height="15"><path d="M0.5,4.5 L8.5,4.5 L4.5,0.5 Z"/><path d="M0.5,10.5 L8.5,10.5 L4.5,14.5 Z"/></svg>
<svg style="position:absolute;left:441px;top:93px" width="11" height="12"><path d="M3.2,1.2 H5.8 Q8,1.2 8,3.3 V5.5" fill="none" stroke="#3a3a10" stroke-width="1.2"/><rect x="0.6" y="5" width="8.2" height="5.8" rx="1" fill="#f6f2b0" stroke="#3a3a10" stroke-width="1.1"/><rect x="4" y="6.8" width="1.6" height="2.2" fill="#222"/></svg>
<div style="position:absolute;left:530px;top:85px;width:54px;height:28px;background:linear-gradient(#f3f3f3,#dedede);border:1px solid #a0a0a0;border-radius:3px;box-sizing:border-box;"></div>
<div style="position:absolute;left:568px;top:85px;width:1px;height:28px;background:#a0a0a0;"></div>
<div class="t" style="left:538px;top:92.6px;font-size:10.5px;color:#222;">px</div>
<svg style="position:absolute;left:572.5px;top:97px" width="8" height="5"><path d="M0,0 L8,0 L4,4.5 Z"/></svg>
<div style="position:absolute;left:606px;top:91px;width:18px;height:17px;background:linear-gradient(#c4c4c4,#b0b0b0);border:1px solid #8c8c8c;border-radius:3px;box-sizing:border-box;"></div>
<div style="position:absolute;left:624px;top:91px;width:18px;height:17px;background:linear-gradient(#c4c4c4,#b0b0b0);border:1px solid #8c8c8c;border-radius:3px;box-sizing:border-box;"></div>
<div style="position:absolute;left:642px;top:91px;width:18px;height:17px;background:linear-gradient(#c4c4c4,#b0b0b0);border:1px solid #8c8c8c;border-radius:3px;box-sizing:border-box;"></div>
<div style="position:absolute;left:660px;top:91px;width:18px;height:17px;background:linear-gradient(#c4c4c4,#b0b0b0);border:1px solid #8c8c8c;border-radius:3px;box-sizing:border-box;"></div>
<div style="position:absolute;left:4px;top:586px;width:718px;height:28px;background:#efefef;"></div>
<div class="t" style="left:6px;top:589px;font-size:10px;">F:</div>
<div class="t" style="left:18px;top:589px;font-size:11px;font-weight:bold;">a</div>
<div class="t" style="left:6px;top:602px;font-size:10px;">S:</div>
<div class="t" style="left:18px;top:602px;font-size:11px;font-weight:bold;">m</div>
<div style="position:absolute;left:28px;top:586px;width:70px;height:14px;background:#878787;"></div>
<div class="t" style="left:51px;top:602.5px;font-size:10px;color:#222;">Unset</div>
<div class="t" style="left:102px;top:595.5px;font-size:10px;">O:</div>
<div style="position:absolute;left:114.5px;top:589.5px;width:25px;height:20px;background:#f8f8f8;border:1px solid #9a9a9a;border-radius:3px;box-sizing:border-box;box-shadow:inset 1px 1px 0 #d8d8d8;"></div><div class="t" style="left:118.0px;top:595.2px;font-size:10px;letter-spacing:-0.35px;color:#1a1a1a;">100</div>
<svg style="position:absolute;left:143px;top:592px" width="9" height="15"><path d="M0.5,4.5 L8.5,4.5 L4.5,0.5 Z"/><path d="M0.5,10.5 L8.5,10.5 L4.5,14.5 Z"/></svg>
<div style="position:absolute;left:154px;top:588px;width:1px;height:24px;background:#d0d0d0;"></div>
<svg style="position:absolute;left:160px;top:594px" width="13" height="10"><path d="M0.6,6.5 Q6.5,0.5 12.4,6.5 Q6.5,11.5 0.6,6.5 Z" fill="#fff" stroke="#111" stroke-width="1.3"/><circle cx="6.5" cy="6.2" r="2.4" fill="#111"/><path d="M2,2 L3.3,3.8 M4.5,0.5 L5,2.8 M8.5,0.5 L8,2.8 M11,2 L9.7,3.8" stroke="#111" stroke-width="1"/></svg>
<svg style="position:absolute;left:179px;top:593px" width="11" height="12"><path d="M3.2,1.2 H5.8 Q8,1.2 8,3.3 V5.5" fill="none" stroke="#3a3a10" stroke-width="1.2"/><rect x="0.6" y="5" width="8.2" height="5.8" rx="1" fill="#f6f2b0" stroke="#3a3a10" stroke-width="1.1"/><rect x="4" y="6.8" width="1.6" height="2.2" fill="#222"/></svg>
<div style="position:absolute;left:193px;top:586px;width:77px;height:27px;background:linear-gradient(#f3f3f3,#dedede);border:1px solid #a0a0a0;border-radius:3px;box-sizing:border-box;"></div>
<div style="position:absolute;left:251px;top:588px;width:1px;height:23px;background:#b0b0b0;"></div>
<div class="t" style="left:201px;top:595px;font-size:8px;font-weight:bold;">&#8226;</div>
<div class="t" style="left:205px;top:594px;font-size:11px;font-weight:bold;letter-spacing:-0.1px;">Layer 1</div>
<svg style="position:absolute;left:256px;top:597px" width="9" height="6"><path d="M0,0 L9,0 L4.5,5 Z"/></svg>
<div class="t" style="left:275.5px;top:593px;font-size:13px;letter-spacing:0.05px;"><b>2</b> objects of types <b>Ellipse, Star</b> in layer <b>Layer 1</b>. Click</div>
<div style="position:absolute;left:594px;top:588px;width:1px;height:24px;background:#d0d0d0;"></div>
<div class="t" style="left:597px;top:587.5px;font-size:10px;">X:</div>
<div class="t" style="left:597px;top:600px;font-size:10px;">Y:</div>
<div class="t" style="left:611.5px;top:587.5px;font-size:10px;letter-spacing:-0.3px;">24.39</div>
<div class="t" style="left:611.5px;top:600px;font-size:10px;letter-spacing:-0.3px;">43.49</div>
<div class="t" style="left:636px;top:594px;font-size:10px;">Z:</div>
<div style="position:absolute;left:647px;top:589px;width:45px;height:20px;background:#ffffff;border:1px solid #9a9a9a;border-radius:3px;box-sizing:border-box;box-shadow:inset 1px 1px 0 #d8d8d8;"></div><div class="t" style="left:654px;top:594.8px;font-size:10px;letter-spacing:-0.35px;color:#1a1a1a;">454%</div>
<svg style="position:absolute;left:695px;top:592px" width="9" height="15"><path d="M0.5,4.5 L8.5,4.5 L4.5,0.5 Z"/><path d="M0.5,10.5 L8.5,10.5 L4.5,14.5 Z"/></svg>
<svg style="position:absolute;left:707px;top:598px" width="16" height="16"><path d="M15,1 L1,15 M15,5.5 L5.5,15 M15,10 L10,15" stroke="#9a9a9a" stroke-width="1.2"/><path d="M15,2.5 L2.5,15 M15,7 L7,15 M15,11.5 L11.5,15" stroke="#ffffff" stroke-width="0.9"/></svg>
<div style="position:absolute;left:33px;top:125px;width:1px;height:421px;background:#d4d4d4;"></div>
<div style="position:absolute;left:34px;top:125px;width:1px;height:421px;background:#b4b4b4;"></div>
<div style="position:absolute;left:4px;top:545px;width:31px;height:1px;background:#b4b4b4;"></div>
<div style="position:absolute;left:5px;top:127px;width:29px;height:29px;background:#b8b8b8;border-radius:4px;box-shadow:inset 0 0 0 1px #aaaaaa;"></div>
<svg style="position:absolute;left:0;top:0" width="727" height="618"><path d="M13.5,133.5 L13.5,150 L17.3,146.5 L20.3,152.5 L23.2,151 L20.4,145.3 L25,145 Z" fill="#000" stroke="#fff" stroke-width="0.8" stroke-linejoin="round"/><path d="M13.5,166.5 L28.5,162.5 M13.5,166.5 L9.5,181.5" stroke="#8a8a8a" stroke-width="1"/><rect x="10.5" y="163.5" width="6" height="6" fill="#4848f0" stroke="#1818b0"/><rect x="12" y="165" width="2" height="2" fill="#9898ff"/><rect x="26.5" y="160.5" width="4" height="4" fill="#d8d8ff" stroke="#4040e0"/><rect x="7.5" y="179.5" width="4" height="4" fill="#d8d8ff" stroke="#4040e0"/><path d="M15.5,168.5 L28,177.8 L23.7,181.8 Z" fill="#000"/><defs><linearGradient id="lens" x1="0" y1="0" x2="1" y2="1"><stop offset="0" stop-color="#f4f8ff"/><stop offset="1" stop-color="#a9c2e4"/></linearGradient><linearGradient id="rectg" x1="0" y1="0" x2="1" y2="1"><stop offset="0" stop-color="#ffffff"/><stop offset="1" stop-color="#9fb8d8"/></linearGradient><linearGradient id="circg" x1="0" y1="0" x2="1" y2="1"><stop offset="0" stop-color="#ffffff"/><stop offset="1" stop-color="#f59aa6"/></linearGradient><linearGradient id="gradg" x1="0" y1="0" x2="1" y2="1"><stop offset="0" stop-color="#f0f0f0"/><stop offset="1" stop-color="#8ea8c8"/></linearGradient></defs><path d="M21.5,204.5 L29.5,212.5" stroke="#6a5010" stroke-width="6" stroke-linecap="round"/><path d="M21.5,204.5 L29.5,212.5" stroke="#f2c23a" stroke-width="4" stroke-linecap="round"/><circle cx="15" cy="198" r="7" fill="url(#lens)" stroke="#404040" stroke-width="1.6"/><rect x="10" y="223" width="18" height="18" fill="url(#rectg)" stroke="#000" stroke-width="1.8"/><circle cx="19" cy="261.5" r="9.3" fill="url(#circg)" stroke="#333" stroke-width="1.3"/><path d="M15,281.5 L22.5,285.5 L21,295 L9.5,296.5 L8,287.5 Z" fill="#f5efb8" stroke="#111" stroke-width="1.3" stroke-linejoin="round"/><path d="M21.5,287 L24,292.5 L30,293 L25.5,297 L26.5,302.5 L21.5,299.5 L16,302 L17.5,296.5 L13.5,292.5 L19,292 Z" fill="#f5ec98" stroke="#111" stroke-width="1.3" stroke-linejoin="round"/><path d="M19.06,322.74 L19.09,322.75 L19.13,322.77 L19.16,322.80 L19.20,322.82 L19.23,322.84 L19.27,322.87 L19.30,322.90 L19.33,322.94 L19.36,322.97 L19.39,323.01 L19.42,323.04 L19.44,323.08 L19.47,323.13 L19.49,323.17 L19.52,323.22 L19.54,323.26 L19.55,323.31 L19.57,323.36 L19.59,323.41 L19.60,323.47 L19.61,323.52 L19.62,323.58 L19.62,323.64 L19.62,323.69 L19.63,323.75 L19.62,323.81 L19.62,323.87 L19.61,323.93 L19.60,324.00 L19.59,324.06 L19.58,324.12 L19.56,324.18 L19.54,324.25 L19.51,324.31 L19.49,324.37 L19.46,324.43 L19.43,324.50 L19.39,324.56 L19.35,324.62 L19.31,324.68 L19.27,324.74 L19.22,324.79 L19.17,324.85 L19.12,324.91 L19.07,324.96 L19.01,325.01 L18.95,325.06 L18.88,325.11 L18.82,325.16 L18.75,325.20 L18.68,325.25 L18.61,325.29 L18.53,325.32 L18.46,325.36 L18.38,325.39 L18.29,325.42 L18.21,325.45 L18.12,325.47 L18.04,325.50 L17.95,325.51 L17.86,325.53 L17.77,325.54 L17.67,325.55 L17.58,325.55 L17.48,325.56 L17.39,325.55 L17.29,325.55 L17.19,325.54 L17.09,325.53 L16.99,325.51 L16.90,325.49 L16.80,325.46 L16.70,325.44 L16.60,325.40 L16.50,325.37 L16.40,325.33 L16.31,325.28 L16.21,325.23 L16.11,325.18 L16.02,325.13 L15.93,325.07 L15.83,325.00 L15.74,324.93 L15.66,324.86 L15.57,324.79 L15.49,324.71 L15.40,324.63 L15.33,324.54 L15.25,324.45 L15.17,324.36 L15.10,324.26 L15.03,324.16 L14.97,324.06 L14.91,323.95 L14.85,323.84 L14.79,323.73 L14.74,323.61 L14.69,323.50 L14.65,323.38 L14.61,323.25 L14.58,323.13 L14.54,323.00 L14.52,322.87 L14.50,322.74 L14.48,322.61 L14.46,322.48 L14.46,322.34 L14.45,322.20 L14.45,322.07 L14.46,321.93 L14.47,321.79 L14.49,321.65 L14.51,321.51 L14.53,321.37 L14.57,321.23 L14.60,321.09 L14.65,320.95 L14.69,320.81 L14.74,320.68 L14.80,320.54 L14.87,320.40 L14.93,320.27 L15.01,320.14 L15.08,320.01 L15.17,319.88 L15.26,319.75 L15.35,319.63 L15.45,319.51 L15.55,319.39 L15.66,319.28 L15.77,319.16 L15.89,319.05 L16.01,318.95 L16.14,318.85 L16.27,318.75 L16.40,318.66 L16.54,318.57 L16.68,318.48 L16.83,318.40 L16.98,318.33 L17.13,318.26 L17.29,318.19 L17.45,318.13 L17.61,318.08 L17.77,318.03 L17.94,317.98 L18.11,317.94 L18.28,317.91 L18.46,317.89 L18.63,317.86 L18.81,317.85 L18.99,317.84 L19.17,317.84 L19.35,317.84 L19.53,317.86 L19.72,317.87 L19.90,317.90 L20.08,317.93 L20.26,317.96 L20.45,318.01 L20.63,318.06 L20.81,318.11 L20.99,318.17 L21.16,318.24 L21.34,318.32 L21.51,318.40 L21.69,318.49 L21.86,318.59 L22.02,318.69 L22.19,318.80 L22.35,318.91 L22.51,319.03 L22.66,319.16 L22.81,319.29 L22.96,319.43 L23.10,319.57 L23.24,319.72 L23.37,319.88 L23.50,320.04 L23.63,320.20 L23.74,320.38 L23.86,320.55 L23.96,320.73 L24.07,320.91 L24.16,321.10 L24.25,321.30 L24.33,321.49 L24.41,321.69 L24.48,321.90 L24.54,322.10 L24.60,322.31 L24.65,322.53 L24.69,322.74 L24.72,322.96 L24.75,323.18 L24.77,323.40 L24.78,323.62 L24.78,323.85 L24.78,324.07 L24.77,324.30 L24.75,324.53 L24.72,324.75 L24.68,324.98 L24.64,325.20 L24.59,325.43 L24.53,325.65 L24.46,325.88 L24.38,326.10 L24.30,326.32 L24.21,326.53 L24.11,326.75 L24.00,326.96 L23.89,327.17 L23.76,327.38 L23.63,327.58 L23.49,327.78 L23.35,327.97 L23.20,328.16 L23.04,328.35 L22.87,328.53 L22.70,328.71 L22.52,328.88 L22.33,329.04 L22.14,329.20 L21.94,329.35 L21.73,329.50 L21.52,329.64 L21.31,329.77 L21.09,329.89 L20.86,330.01 L20.63,330.12 L20.39,330.23 L20.15,330.32 L19.91,330.41 L19.66,330.49 L19.41,330.56 L19.15,330.62 L18.89,330.67 L18.63,330.72 L18.37,330.75 L18.11,330.78 L17.84,330.80 L17.57,330.81 L17.30,330.81 L17.03,330.80 L16.76,330.78 L16.49,330.75 L16.22,330.71 L15.95,330.66 L15.68,330.60 L15.41,330.54 L15.15,330.46 L14.88,330.38 L14.62,330.28 L14.36,330.18 L14.10,330.06 L13.85,329.94 L13.60,329.81 L13.35,329.67 L13.11,329.52 L12.87,329.36 L12.64,329.19 L12.41,329.02 L12.19,328.83 L11.97,328.64 L11.76,328.44 L11.55,328.23 L11.36,328.01 L11.17,327.79 L10.98,327.56 L10.81,327.32 L10.64,327.08 L10.48,326.83 L10.32,326.57 L10.18,326.31 L10.05,326.04 L9.92,325.77 L9.80,325.49 L9.69,325.20 L9.60,324.91 L9.51,324.62 L9.43,324.32 L9.36,324.03 L9.30,323.72 L9.25,323.42 L9.21,323.11 L9.19,322.80 L9.17,322.49 L9.16,322.17 L9.17,321.86 L9.18,321.54 L9.21,321.23 L9.25,320.91 L9.30,320.60 L9.36,320.28 L9.43,319.97 L9.51,319.66 L9.60,319.35 L9.70,319.04 L9.82,318.74 L9.94,318.44 L10.08,318.14 L10.22,317.85 L10.38,317.56 L10.55,317.28 L10.72,317.00 L10.91,316.73 L11.11,316.46 L11.31,316.20 L11.53,315.94 L11.75,315.69 L11.99,315.45 L12.23,315.22 L12.48,314.99 L12.74,314.78 L13.01,314.57 L13.29,314.37 L13.57,314.17 L13.86,313.99 L14.16,313.82 L14.46,313.66 L14.77,313.50 L15.09,313.36 L15.41,313.23 L15.74,313.11 L16.07,313.00 L16.41,312.90 L16.75,312.81 L17.09,312.74 L17.44,312.67 L17.79,312.62 L18.15,312.58 L18.50,312.55 L18.86,312.54 L19.22,312.53 L19.58,312.54 L19.94,312.56 L20.30,312.60 L20.66,312.64 L21.02,312.70 L21.37,312.77 L21.73,312.86 L22.08,312.95 L22.44,313.06 L22.78,313.18 L23.13,313.31 L23.47,313.46 L23.81,313.61 L24.14,313.78 L24.47,313.96 L24.79,314.15 L25.10,314.36 L25.41,314.57 L25.71,314.80 L26.01,315.04 L26.30,315.28 L26.58,315.54 L26.85,315.81 L27.11,316.09 L27.37,316.37 L27.61,316.67 L27.85,316.98 L28.07,317.29 L28.28,317.61 L28.49,317.94 L28.68,318.28 L28.86,318.63 L29.03,318.98 L29.19,319.34 L29.34,319.70 L29.47,320.07 L29.59,320.45 L29.70,320.83 L29.80,321.22 L29.88,321.60 L29.95,322.00 L30.01,322.39 L30.05,322.79 L30.08,323.19 L30.09,323.60 L30.10,324.00 L30.08,324.41 L30.06,324.81 L30.02,325.22 L29.96,325.62 L29.90,326.02 L29.81,326.42 L29.72,326.82 L29.61,327.22 L29.48,327.62 L29.35,328.01 L29.20,328.39 L29.03,328.77 L28.85,329.15 L28.66,329.52 L28.46,329.89 L28.24,330.25 L28.01,330.60 L27.77,330.94" fill="none" stroke="#1a1a1a" stroke-width="1.35"/><path d="M8.5,341.5 L13,341.5 L9,351.5 L14.5,349.5 L14.5,357 Q15.5,362.5 21,361 Q25,359.5 27.5,356.5" fill="none" stroke="#222" stroke-width="1.2" stroke-linejoin="round"/><defs><linearGradient id="pencg" x1="0" y1="0" x2="1" y2="0"><stop offset="0" stop-color="#ffe860"/><stop offset="1" stop-color="#e89a10"/></linearGradient></defs><path d="M23.5,339.5 Q27,339 30.5,343.5 L23.5,355.5 L17,352 Z" fill="url(#pencg)" stroke="#9a7010" stroke-width="0.7"/><path d="M17,352 L23.5,355.5 L18.7,361.5 Z" fill="#fbf2d0" stroke="#8a7a50" stroke-width="0.6"/><path d="M17.8,358.2 L19.9,359.4 L18.5,361.8 Z" fill="#000"/><defs><linearGradient id="peng" x1="0" y1="0" x2="1" y2="0.3"><stop offset="0" stop-color="#c8f0f8"/><stop offset="1" stop-color="#2a5aa8"/></linearGradient><linearGradient id="nibg" x1="0" y1="0" x2="1" y2="1"><stop offset="0" stop-color="#fff8a0"/><stop offset="1" stop-color="#d8b020"/></linearGradient></defs><path d="M8.4,371.5 H20.7 M8.4,371.5 Q14,378 16.3,385 Q17,390 12,391.5" fill="none" stroke="#222" stroke-width="1"/><rect x="7.6" y="389.7" width="4" height="3.8" fill="#fff" stroke="#000" stroke-width="1.5"/><path d="M11.5,391.6 H17.5" stroke="#000" stroke-width="1.2"/><circle cx="18.7" cy="391.8" r="1.3" fill="#fff" stroke="#000" stroke-width="1"/><path d="M23.5,370.3 L30.8,376.6 L26.8,381.5 L20.5,379 Z" fill="url(#peng)" stroke="#2a4a80" stroke-width="0.6"/><path d="M20.5,379 L26.8,381.5 L25.5,384 L20,382.5 Z" fill="#f0e080" stroke="#555" stroke-width="0.5"/><path d="M20.5,383 L19.3,390.3 L24.5,384" fill="#e8e8e8" stroke="#333" stroke-width="0.8"/><path d="M7,400.5 Q12,399.3 15.5,402.5 Q13,407 13,412 Q13,417 16.5,419 Q22,420 29.5,418.3 Q24,422 17,422 Q10.5,421.5 9.5,414 Q9,408 10.5,404 Q9,402 7,400.5 Z" fill="#0e0e0e"/><path d="M17,420.5 L18.5,410 L20,407 L27,407.8 L26.5,411 Q23,416 17,420.5 Z" fill="url(#nibg)" stroke="#333" stroke-width="0.8"/><path d="M19.5,407.3 L21.5,403.8 L29,405.3 L27.3,408.2 Z" fill="#6a2a3a"/><path d="M21.5,403.8 L23,400.8 L30,402.2 L29,405.3 Z" fill="#5a94b8"/><path d="M21.5,403.5 L22,399.5" stroke="#555" stroke-width="0.8"/><circle cx="21.2" cy="412.2" r="1.1" fill="#000"/><text x="7.5" y="451" font-family="Liberation Sans" font-weight="bold" font-size="26" fill="#111">A</text><path d="M27.5,432 V451.5 M25.5,431.5 H29.5 M25.5,452 H29.5" stroke="#222" stroke-width="0.9"/><path d="M20.5,463.5 L26.5,467.5 L26.5,476" fill="none" stroke="#111" stroke-width="1.2"/><path d="M13,468 L10.5,476" stroke="#111" stroke-width="1.2" stroke-dasharray="2 1.5"/><rect x="12.5" y="460.5" width="8" height="7" fill="#b8cce4" stroke="#111" stroke-width="1.2"/><rect x="16.5" y="469.5" width="8" height="5" fill="#f2dc50" stroke="#111" stroke-width="1.2"/><rect x="7.5" y="476.5" width="8" height="7" fill="#b8cce4" stroke="#111" stroke-width="1.2"/><rect x="22.5" y="476.5" width="8" height="7" fill="#b8cce4" stroke="#111" stroke-width="1.2"/><rect x="8" y="491" width="22" height="22" fill="url(#gradg)"/><path d="M8,513 H30 V491" fill="none" stroke="#333" stroke-width="1"/><path d="M12,496.5 L26,507" stroke="#333" stroke-width="1.2"/><rect x="10" y="494.5" width="4" height="4" fill="#fff" stroke="#000" stroke-width="1.2"/><rect x="24.5" y="505.5" width="4" height="4" fill="#fff" stroke="#000" stroke-width="1.2"/><path d="M20.5,531 L12.5,539.5" stroke="#2a2a2a" stroke-width="3.4" stroke-linecap="round"/><path d="M20.5,531 L13,539" stroke="#e4ecf4" stroke-width="1.5" stroke-linecap="round"/><path d="M18.5,528 L23.5,533" stroke="#151515" stroke-width="3.2"/><ellipse cx="26" cy="525" rx="5" ry="3.4" transform="rotate(-45 26 525)" fill="#141414"/><ellipse cx="25" cy="523.5" rx="1.5" ry="0.8" transform="rotate(-45 25 523.5)" fill="#777"/><ellipse cx="11.3" cy="542.5" rx="1.5" ry="2" fill="#fff" stroke="#222" stroke-width="0.9"/></svg>
<svg style="position:absolute;left:0;top:0" width="727" height="618"><defs>
<linearGradient id="blueg" x1="0" y1="0" x2="1" y2="1"><stop offset="0" stop-color="#eaf2fb"/><stop offset="1" stop-color="#9db8d8"/></linearGradient>
<linearGradient id="foldg" x1="0" y1="0" x2="1" y2="0"><stop offset="0" stop-color="#bfe0ff"/><stop offset="0.5" stop-color="#3d7ee8"/><stop offset="1" stop-color="#0a2fb0"/></linearGradient>
<linearGradient id="orag" x1="0" y1="0" x2="1" y2="1"><stop offset="0" stop-color="#ffd040"/><stop offset="1" stop-color="#e07810"/></linearGradient>
<linearGradient id="silg" x1="0" y1="0" x2="1" y2="1"><stop offset="0" stop-color="#f4f6fa"/><stop offset="1" stop-color="#8898b8"/></linearGradient>
<linearGradient id="yelg" x1="0" y1="0" x2="0" y2="1"><stop offset="0" stop-color="#f8e890"/><stop offset="1" stop-color="#e8c840"/></linearGradient>
<radialGradient id="sun"><stop offset="0" stop-color="#fff8a0"/><stop offset="0.5" stop-color="#f8c830"/><stop offset="1" stop-color="#f8c830" stop-opacity="0"/></radialGradient>
<pattern id="dith" width="2" height="2" patternUnits="userSpaceOnUse"><rect width="1" height="1" fill="#3a4a80"/><rect x="1" y="1" width="1" height="1" fill="#3a4a80"/></pattern>
</defs><g transform="translate(19,60)"><path d="M0.5,0.5 H8.5 L12.5,4.5 V15.5 H0.5 Z" fill="#fdfdff" stroke="#8a8a8a"/><path d="M8.5,0.5 V4.5 H12.5" fill="#e8e8e8" stroke="#8a8a8a"/><circle cx="10.2" cy="9" r="4.5" fill="url(#sun)"/></g><g transform="translate(39,61)"><path d="M0.5,2 H5 L6.5,3.5 H13 V14.5 H0.5 Z" fill="#cfe0f4" stroke="#1c3c90"/><path d="M4,5 L11,1 L14,6 L6,10 Z" fill="#ffffff" stroke="#8aa0c8" stroke-width="0.6"/><path d="M2.5,7 H15.5 L13.5,14.5 H0.5 Z" fill="url(#foldg)" stroke="#10309a" stroke-width="0.8"/></g><g transform="translate(62,61)"><defs><linearGradient id="flop" x1="0" y1="0" x2="0" y2="1"><stop offset="0" stop-color="#e8e8f8"/><stop offset="1" stop-color="#8888b0"/></linearGradient></defs><rect x="0.9" y="0.9" width="13" height="13" rx="0.8" fill="url(#flop)" stroke="#14142e" stroke-width="1.8"/><rect x="2.3" y="1.8" width="10" height="3.4" fill="#f4f4ff"/><rect x="1.8" y="5.4" width="11" height="2" fill="#34345e"/><rect x="2.8" y="2.2" width="1.8" height="1.8" fill="#14142e"/><rect x="3" y="8.5" width="8.5" height="4.5" fill="#c8c8e4" opacity="0.6"/></g><g transform="translate(83,60)"><rect x="4" y="0.5" width="8" height="6" fill="#fff" stroke="#9a9a9a" stroke-width="0.8"/><path d="M1,6 H15 L16,12 H0 Z" fill="#d8dce4" stroke="#9aa0a8" stroke-width="0.8"/><rect x="1.5" y="7.5" width="13" height="2.5" fill="#3d8ee0"/><rect x="1" y="11.5" width="14" height="2" fill="#5a5a5a"/><rect x="3" y="13" width="10" height="3" fill="#e0e8f0"/></g><g transform="translate(119,60)"><path d="M4.8,0.7 H11.5 L15.3,4.5 V15.3 H4.8 Z" fill="#f4f4f4" stroke="#111" stroke-width="1.3"/><path d="M11.5,0.7 V4.5 H15.3" fill="#fff" stroke="#111" stroke-width="0.9"/><path d="M0,8.5 H8" stroke="#000" stroke-width="1.3"/><path d="M6.5,5.5 L10,8.5 L6.5,11.5 Z" fill="#000"/></g><g transform="translate(141,60)"><path d="M0.7,0.7 H7.5 L11.3,4.5 V15.3 H0.7 Z" fill="#f0f0f0" stroke="#111" stroke-width="1.3"/><path d="M7.5,0.7 V4.5 H11.3" fill="#fff" stroke="#111" stroke-width="0.9"/><path d="M6,8.5 H13.5" stroke="#000" stroke-width="1.3"/><path d="M12.5,5.5 L16,8.5 L12.5,11.5 Z" fill="#000"/></g><defs><linearGradient id="undog" x1="0" y1="0" x2="0.3" y2="1"><stop offset="0" stop-color="#70b0ff"/><stop offset="1" stop-color="#0c3ad0"/></linearGradient></defs><g fill="url(#undog)"><path d="M177,67.8 L181.6,63 L186.7,67.8 Z"/><path d="M179.8,67.3 Q180.2,72.8 185.2,73.2 Q190.3,73.2 193.2,68.3 Q189,70.8 185.6,70.2 Q183.8,69.5 184.2,67.3 Z"/></g><g fill="url(#dith)" transform="translate(22,0) rotate(180 185 68)"><path d="M177,67.8 L181.6,63 L186.7,67.8 Z"/><path d="M179.8,67.3 Q180.2,72.8 185.2,73.2 Q190.3,73.2 193.2,68.3 Q189,70.8 185.6,70.2 Q183.8,69.5 184.2,67.3 Z"/></g><g transform="translate(235,60)"><path d="M0.5,0.5 H6.5 L9.5,3.5 V11.5 H0.5 Z" fill="#fafafa" stroke="#9a9a9a"/><path d="M6.5,4.5 H12.5 L15.5,7.5 V15.5 H6.5 Z" fill="#f4f4fa" stroke="#8a8a8a"/></g><g transform="translate(257,60)"><path d="M9,1 L6,9 M13,1 L8,10" stroke="#9890b8" stroke-width="1.6"/><circle cx="4" cy="10" r="3.2" fill="url(#orag)"/><circle cx="10" cy="12.5" r="3" fill="url(#orag)"/></g><g transform="translate(279,60)"><rect x="0.5" y="2" width="9" height="12.5" fill="url(#yelg)" stroke="#b08020" stroke-width="0.8"/><rect x="3" y="0.5" width="4" height="3" fill="#6a6a6a"/><path d="M9,14.5 V8 L12,4.5 L15.5,8 V14.5 Z" fill="#8ab4ec" stroke="#3a6ab8" stroke-width="0.8"/><rect x="6.5" y="2.5" width="2.5" height="2" fill="#e08020"/></g><g transform="translate(315,60)"><circle cx="7.8" cy="7.4" r="6.6" fill="#e4eaf2" stroke="#1a1a1a" stroke-width="1.6"/><rect x="3.5" y="4.5" width="8.5" height="6" fill="#fff" stroke="#111" stroke-dasharray="1 1.2"/><path d="M12.5,12 L15,14.5" stroke="#000" stroke-width="2.6" stroke-linecap="round"/></g><g transform="translate(337,60)"><circle cx="7.8" cy="7.4" r="6.6" fill="#e4eaf2" stroke="#1a1a1a" stroke-width="1.6"/><rect x="3.5" y="3.5" width="5" height="5" fill="#f2e8a0" stroke="#333" stroke-width="0.9"/><rect x="6.5" y="6.5" width="5" height="5" fill="#f2e8a0" stroke="#333" stroke-width="0.9"/><path d="M12.5,12 L15,14.5" stroke="#000" stroke-width="2.6" stroke-linecap="round"/></g><g transform="translate(359,60)"><circle cx="7.8" cy="7.4" r="6.6" fill="#e4eaf2" stroke="#1a1a1a" stroke-width="1.6"/><rect x="5" y="3" width="6" height="9" fill="url(#blueg)" stroke="#222" stroke-width="0.9"/><path d="M12.5,12 L15,14.5" stroke="#000" stroke-width="2.6" stroke-linecap="round"/></g><g transform="translate(395,60)"><rect x="0.8" y="0.8" width="9" height="7.5" fill="#b8bcc4" stroke="#222" stroke-width="1.2"/><rect x="3.8" y="3.8" width="12" height="11.5" fill="url(#blueg)" stroke="#111" stroke-width="1.5"/></g><g transform="translate(417,60)"><rect x="0.8" y="0.8" width="9" height="7.5" fill="#b8bcc4" stroke="#222" stroke-width="1.2"/><rect x="3.8" y="3.8" width="12" height="11.5" fill="url(#blueg)" stroke="#111" stroke-width="1.5"/><path d="M8,9 V7.5 A2,2 0 0 1 12,7.5 V9" fill="none" stroke="#111" stroke-width="1.3"/><rect x="6.8" y="9" width="6.5" height="4.3" fill="#f2e27a" stroke="#111" stroke-width="1.1"/></g><g transform="translate(439,60)"><rect x="0.8" y="0.8" width="9" height="7.5" fill="#b8bcc4" stroke="#222" stroke-width="1.2"/><rect x="3.8" y="3.8" width="12" height="11.5" fill="url(#blueg)" stroke="#111" stroke-width="1.5"/><path d="M11.5,5.5 H9.5" stroke="#111" stroke-width="1.3"/><rect x="6.8" y="9" width="6.5" height="4.3" fill="#9ac890" stroke="#111" stroke-width="1.1"/><path d="M8,9 V7.5" stroke="#111" stroke-width="1.3"/></g><g transform="translate(475,60)"><rect x="2.5" y="6.5" width="9.5" height="7" fill="#c8d8e8" stroke="#222" stroke-width="1.1"/><circle cx="10.5" cy="5" r="4" fill="#d0d8e4" stroke="#222" stroke-width="1.1"/><rect x="0" y="0" width="2.4" height="2.4" fill="#000"/><rect x="14" y="0" width="2.4" height="2.4" fill="#000"/><rect x="0" y="14" width="2.4" height="2.4" fill="#000"/><rect x="14" y="14" width="2.4" height="2.4" fill="#000"/></g><g transform="translate(497,60)"><rect x="3" y="6.5" width="9" height="7" fill="#f0d860" stroke="#222" stroke-width="1.1"/><circle cx="11" cy="5" r="4" fill="#d4d8e8" stroke="#222" stroke-width="1.1"/><rect x="0" y="4" width="2.4" height="2.4" fill="#000"/><rect x="5" y="0" width="2.4" height="2.4" fill="#000"/><rect x="14" y="0" width="2.4" height="2.4" fill="#000"/><rect x="5" y="9" width="2.4" height="2.4" fill="#000"/><rect x="14" y="9" width="2.4" height="2.4" fill="#000"/><rect x="0" y="14" width="2.4" height="2.4" fill="#000"/><rect x="12" y="14" width="2.4" height="2.4" fill="#000"/></g><g transform="translate(530,56)"><defs><linearGradient id="fsh" x1="0" y1="0" x2="1" y2="0"><stop offset="0" stop-color="#000"/><stop offset="1" stop-color="#000" stop-opacity="0.3"/></linearGradient><linearGradient id="fsv" x1="0" y1="0" x2="0" y2="1"><stop offset="0" stop-color="#000"/><stop offset="1" stop-color="#000" stop-opacity="0.4"/></linearGradient></defs><rect x="3" y="4" width="15.5" height="1.8" fill="url(#fsh)"/><rect x="3" y="4" width="1.8" height="14.5" fill="url(#fsv)"/><path d="M3.3,19.3 Q5,15 10,12.2 L13.8,10.2 L15.5,12.2 Q13,16.5 8.5,18.3 Q5.5,19.5 3.3,19.3 Z" fill="#111"/><path d="M6,17 Q9,14 12,12.5" stroke="#777" stroke-width="0.8" fill="none"/><path d="M13.5,9.5 L16,7 L18.5,9.2 L16,12.3 Z" fill="#e8dc50"/><path d="M15.5,8 L18.8,4.5" stroke="#333" stroke-width="1.1"/></g><g transform="translate(555,60)"><text x="8.2" y="15.3" text-anchor="middle" font-family="Liberation Serif" font-weight="bold" font-size="22.5" fill="#000">T</text></g><g transform="translate(577,60)"><rect x="0.75" y="0.75" width="15" height="14.5" fill="#f4f4f4" stroke="#111" stroke-width="1.5"/><rect x="1.5" y="1.5" width="13.5" height="2.5" fill="#a8c0e0"/><path d="M1,4.3 H15.5" stroke="#111" stroke-width="1"/><path d="M6.5,6.5 L4,9.3 L6.5,12 M10,6.5 L12.5,9.3 L10,12" fill="none" stroke="#111" stroke-width="1.1"/></g><g transform="translate(599,60)"><path d="M1,0 V16" stroke="#a81818" stroke-width="1.2"/><rect x="2.5" y="0.8" width="5" height="3.2" fill="#b8c8dc" stroke="#111" stroke-width="1"/><rect x="2.5" y="6.5" width="13" height="3" fill="#b8c8dc" stroke="#111" stroke-width="1"/><rect x="2.5" y="11.8" width="10" height="3.3" fill="#b8c8dc" stroke="#111" stroke-width="1"/></g><g transform="translate(635.5,60)"><path d="M7.2,7.2 L13.8,13.8" stroke="#b85a08" stroke-width="5.4" stroke-linecap="round"/><path d="M7.2,7.2 L13.6,13.6" stroke="url(#orag)" stroke-width="3.6" stroke-linecap="round"/><circle cx="5.3" cy="5.3" r="4.6" fill="url(#silg)" stroke="#6a7898" stroke-width="1"/><path d="M-0.5,2.6 L3.2,6 L6,3.2 L2.6,-0.5 Z" fill="#efefef"/><path d="M0.3,3.3 L3.2,6 L6,3.2 L3.3,0.3" fill="none" stroke="#6a7898" stroke-width="0.9"/></g><g transform="translate(657,60)"><path d="M7.2,7.2 L13.8,13.8" stroke="#b85a08" stroke-width="5.4" stroke-linecap="round"/><path d="M7.2,7.2 L13.6,13.6" stroke="url(#orag)" stroke-width="3.6" stroke-linecap="round"/><circle cx="5.3" cy="5.3" r="4.6" fill="url(#silg)" stroke="#6a7898" stroke-width="1"/><path d="M-0.5,2.6 L3.2,6 L6,3.2 L2.6,-0.5 Z" fill="#efefef"/><path d="M0.3,3.3 L3.2,6 L6,3.2 L3.3,0.3" fill="none" stroke="#6a7898" stroke-width="0.9"/></g><g transform="translate(14,88)"><path d="M11.5,3.3 L14.6,11.8 L10.6,15.8 Z" fill="#111"/><path d="M3,16.4 L18.2,10.3 V16.4 Z" fill="#f0d878" stroke="#111" stroke-width="1"/><path d="M3,16.4 L12,12.8" stroke="#111" stroke-width="1.3"/><rect x="11.2" y="16.4" width="6.4" height="1.8" fill="#111"/><path d="M9.8,5.2 Q5.4,5.3 5.5,10.2" fill="none" stroke="#111" stroke-width="1.2"/><path d="M3,10 L8,10 L5.5,13 Z" fill="#111"/></g><g transform="translate(57.6,88) scale(-1,1)"><path d="M11.5,3.3 L14.6,11.8 L10.6,15.8 Z" fill="#111"/><path d="M3,16.4 L18.2,10.3 V16.4 Z" fill="#cdd4e2" stroke="#111" stroke-width="1"/><path d="M3,16.4 L12,12.8" stroke="#111" stroke-width="1.3"/><rect x="11.2" y="16.4" width="6.4" height="1.8" fill="#111"/><path d="M9.8,5.2 Q5.4,5.3 5.5,10.2" fill="none" stroke="#111" stroke-width="1.2"/><path d="M3,10 L8,10 L5.5,13 Z" fill="#111"/></g><g transform="translate(61,91)"><path d="M6,0.5 L0.5,15 H6 Z" fill="#111"/><path d="M8.5,0.5 L14.5,15 H8.5 Z" fill="#f0e8b0" stroke="#111" stroke-width="1"/><path d="M7.3,0 V16" stroke="#111" stroke-dasharray="1.5 1.5"/></g><g transform="translate(83,91)"><path d="M15.5,0.5 L0.5,6 H15.5 Z" fill="#d8dce4" stroke="#111" stroke-width="1"/><path d="M15.5,15.5 L0.5,9 H15.5 Z" fill="#111"/><path d="M0,7.5 H16" stroke="#111" stroke-dasharray="1.5 1"/></g><g transform="translate(119,91)"><path d="M3,0 V9" stroke="#111" stroke-width="1.2"/><path d="M0.5,7 L3,11 L5.5,7 Z" fill="#111"/><rect x="9" y="0.5" width="6" height="2" fill="#111"/><rect x="9" y="3.5" width="6" height="2" fill="#111"/><rect x="9" y="6.5" width="6" height="2" fill="#111"/><rect x="9" y="9.5" width="6" height="2" fill="#111"/><rect x="0.5" y="12.5" width="15" height="2.5" fill="#f4f0d8" stroke="#6a5a20" stroke-width="0.9"/></g><g transform="translate(141,91)"><path d="M6,6 L2,6" stroke="#111" stroke-width="1.2"/><path d="M4,3.5 L0.5,6 L4,8.5 Z" fill="#111"/><rect x="8" y="0.5" width="7" height="2" fill="#111"/><rect x="8" y="3.5" width="7" height="2" fill="#111"/><rect x="8" y="6.5" width="7" height="2" fill="#111"/><rect x="0.5" y="10" width="15" height="2.5" fill="#f4f0d8" stroke="#6a5a20" stroke-width="0.9"/><rect x="8" y="13.5" width="7" height="2" fill="#111"/></g><g transform="translate(163,91)"><rect x="0.5" y="0.5" width="7" height="2" fill="#111"/><rect x="0.5" y="6.5" width="7" height="2" fill="#111"/><rect x="0.5" y="9.5" width="7" height="2" fill="#111"/><rect x="0.5" y="12.5" width="7" height="2" fill="#111"/><rect x="0.5" y="3.2" width="15" height="2.5" fill="#f4f4f4" stroke="#111" stroke-width="0.9"/><path d="M12.5,9 V13" stroke="#111" stroke-width="1.2"/><path d="M10,10 L12.5,7 L15,10 Z" fill="#111"/></g><g transform="translate(185,91)"><rect x="0.5" y="0.5" width="15" height="2.5" fill="#f4f4f4" stroke="#111" stroke-width="0.9"/><rect x="0.5" y="4.5" width="7" height="2" fill="#111"/><rect x="0.5" y="7.5" width="7" height="2" fill="#111"/><rect x="0.5" y="10.5" width="7" height="2" fill="#111"/><rect x="0.5" y="13.5" width="7" height="2" fill="#111"/><path d="M13,6 V15.5" stroke="#111" stroke-width="1.2"/><path d="M10.5,8 L13,4.5 L15.5,8 Z" fill="#111"/></g><g transform="translate(607,91)"><path d="M3,4 H13.5 V9" fill="none" stroke="#111" stroke-width="2.4"/><path d="M3,7.5 H10" stroke="#111" stroke-width="1.4"/><path d="M5,12.5 H13" stroke="#111" stroke-dasharray="1.2 1.2"/><path d="M11.5,10 L15,12.5 L11.5,15 Z" fill="#111"/></g><g transform="translate(625,91)"><path d="M3,4.2 H9 Q13.5,4.2 13.5,9" fill="none" stroke="#111" stroke-width="1.8"/><path d="M3,7.5 H8 Q10,7.5 10.5,9" fill="none" stroke="#111" stroke-width="1.2"/><path d="M5,12.5 H13" stroke="#111" stroke-dasharray="1.2 1.2"/><path d="M11.5,10 L15,12.5 L11.5,15 Z" fill="#111"/></g><g transform="translate(643,91)"><path d="M3,4 H13.5 V9" fill="none" stroke="#111" stroke-width="2.2"/><path d="M3,7.5 H10" stroke="#7aa0d0" stroke-width="2"/><path d="M5,12.5 H13" stroke="#111" stroke-dasharray="1.2 1.2"/><path d="M11.5,10 L15,12.5 L11.5,15 Z" fill="#111"/></g><g transform="translate(661,91)"><path d="M3,5.5 H14" stroke="#111" stroke-width="2.2"/><path d="M5,3 L7,5.5 L5,8 L3,5.5 Z M10,3 L12,5.5 L10,8 L8,5.5 Z" fill="#111"/><path d="M3,8.5 H14" stroke="#111" stroke-dasharray="1 1"/><path d="M5,12.5 H13" stroke="#111" stroke-dasharray="1.2 1.2"/><path d="M11.5,10 L15,12.5 L11.5,15 Z" fill="#111"/></g></svg>
<svg style="position:absolute;left:707px;top:120px" width="12" height="12"><path d="M7.5,7.5 L10.3,10.3" stroke="#6a5010" stroke-width="3.2" stroke-linecap="round"/><path d="M7.5,7.5 L10.3,10.3" stroke="#f2c23a" stroke-width="1.7" stroke-linecap="round"/><circle cx="4.8" cy="4.8" r="3.9" fill="url(#lens)" stroke="#404040" stroke-width="1.2"/></svg>
<svg style="position:absolute;left:0;top:0" width="727" height="618"><rect x="303.0" y="534.0" width="1.5" height="1.5" fill="#a4a4a4"/><rect x="304.5" y="535.5" width="1" height="1" fill="#fff"/><rect x="303.0" y="538.0" width="1.5" height="1.5" fill="#a4a4a4"/><rect x="304.5" y="539.5" width="1" height="1" fill="#fff"/><rect x="303.0" y="542.0" width="1.5" height="1.5" fill="#a4a4a4"/><rect x="304.5" y="543.5" width="1" height="1" fill="#fff"/><rect x="307.0" y="534.0" width="1.5" height="1.5" fill="#a4a4a4"/><rect x="308.5" y="535.5" width="1" height="1" fill="#fff"/><rect x="307.0" y="538.0" width="1.5" height="1.5" fill="#a4a4a4"/><rect x="308.5" y="539.5" width="1" height="1" fill="#fff"/><rect x="307.0" y="542.0" width="1.5" height="1.5" fill="#a4a4a4"/><rect x="308.5" y="543.5" width="1" height="1" fill="#fff"/><rect x="311.0" y="534.0" width="1.5" height="1.5" fill="#a4a4a4"/><rect x="312.5" y="535.5" width="1" height="1" fill="#fff"/><rect x="311.0" y="538.0" width="1.5" height="1.5" fill="#a4a4a4"/><rect x="312.5" y="539.5" width="1" height="1" fill="#fff"/><rect x="311.0" y="542.0" width="1.5" height="1.5" fill="#a4a4a4"/><rect x="312.5" y="543.5" width="1" height="1" fill="#fff"/><rect x="315.0" y="534.0" width="1.5" height="1.5" fill="#a4a4a4"/><rect x="316.5" y="535.5" width="1" height="1" fill="#fff"/><rect x="315.0" y="538.0" width="1.5" height="1.5" fill="#a4a4a4"/><rect x="316.5" y="539.5" width="1" height="1" fill="#fff"/><rect x="315.0" y="542.0" width="1.5" height="1.5" fill="#a4a4a4"/><rect x="316.5" y="543.5" width="1" height="1" fill="#fff"/><rect x="319.0" y="534.0" width="1.5" height="1.5" fill="#a4a4a4"/><rect x="320.5" y="535.5" width="1" height="1" fill="#fff"/><rect x="319.0" y="538.0" width="1.5" height="1.5" fill="#a4a4a4"/><rect x="320.5" y="539.5" width="1" height="1" fill="#fff"/><rect x="319.0" y="542.0" width="1.5" height="1.5" fill="#a4a4a4"/><rect x="320.5" y="543.5" width="1" height="1" fill="#fff"/></svg>
<svg style="position:absolute;left:0;top:0" width="727" height="618"><rect x="43.0" y="573.0" width="1.5" height="1.5" fill="#a4a4a4"/><rect x="44.5" y="574.5" width="1" height="1" fill="#fff"/><rect x="43.0" y="577.0" width="1.5" height="1.5" fill="#a4a4a4"/><rect x="44.5" y="578.5" width="1" height="1" fill="#fff"/><rect x="43.0" y="581.0" width="1.5" height="1.5" fill="#a4a4a4"/><rect x="44.5" y="582.5" width="1" height="1" fill="#fff"/><rect x="47.0" y="573.0" width="1.5" height="1.5" fill="#a4a4a4"/><rect x="48.5" y="574.5" width="1" height="1" fill="#fff"/><rect x="47.0" y="577.0" width="1.5" height="1.5" fill="#a4a4a4"/><rect x="48.5" y="578.5" width="1" height="1" fill="#fff"/><rect x="47.0" y="581.0" width="1.5" height="1.5" fill="#a4a4a4"/><rect x="48.5" y="582.5" width="1" height="1" fill="#fff"/><rect x="51.0" y="573.0" width="1.5" height="1.5" fill="#a4a4a4"/><rect x="52.5" y="574.5" width="1" height="1" fill="#fff"/><rect x="51.0" y="577.0" width="1.5" height="1.5" fill="#a4a4a4"/><rect x="52.5" y="578.5" width="1" height="1" fill="#fff"/><rect x="51.0" y="581.0" width="1.5" height="1.5" fill="#a4a4a4"/><rect x="52.5" y="582.5" width="1" height="1" fill="#fff"/><rect x="55.0" y="573.0" width="1.5" height="1.5" fill="#a4a4a4"/><rect x="56.5" y="574.5" width="1" height="1" fill="#fff"/><rect x="55.0" y="577.0" width="1.5" height="1.5" fill="#a4a4a4"/><rect x="56.5" y="578.5" width="1" height="1" fill="#fff"/><rect x="55.0" y="581.0" width="1.5" height="1.5" fill="#a4a4a4"/><rect x="56.5" y="582.5" width="1" height="1" fill="#fff"/><rect x="59.0" y="573.0" width="1.5" height="1.5" fill="#a4a4a4"/><rect x="60.5" y="574.5" width="1" height="1" fill="#fff"/><rect x="59.0" y="577.0" width="1.5" height="1.5" fill="#a4a4a4"/><rect x="60.5" y="578.5" width="1" height="1" fill="#fff"/><rect x="59.0" y="581.0" width="1.5" height="1.5" fill="#a4a4a4"/><rect x="60.5" y="582.5" width="1" height="1" fill="#fff"/></svg>
<svg style="position:absolute;left:0;top:0" width="727" height="618"><rect x="708.0" y="288.0" width="1.5" height="1.5" fill="#a4a4a4"/><rect x="709.5" y="289.5" width="1" height="1" fill="#fff"/><rect x="708.0" y="292.0" width="1.5" height="1.5" fill="#a4a4a4"/><rect x="709.5" y="293.5" width="1" height="1" fill="#fff"/><rect x="708.0" y="296.0" width="1.5" height="1.5" fill="#a4a4a4"/><rect x="709.5" y="297.5" width="1" height="1" fill="#fff"/><rect x="708.0" y="300.0" width="1.5" height="1.5" fill="#a4a4a4"/><rect x="709.5" y="301.5" width="1" height="1" fill="#fff"/><rect x="708.0" y="304.0" width="1.5" height="1.5" fill="#a4a4a4"/><rect x="709.5" y="305.5" width="1" height="1" fill="#fff"/><rect x="712.0" y="288.0" width="1.5" height="1.5" fill="#a4a4a4"/><rect x="713.5" y="289.5" width="1" height="1" fill="#fff"/><rect x="712.0" y="292.0" width="1.5" height="1.5" fill="#a4a4a4"/><rect x="713.5" y="293.5" width="1" height="1" fill="#fff"/><rect x="712.0" y="296.0" width="1.5" height="1.5" fill="#a4a4a4"/><rect x="713.5" y="297.5" width="1" height="1" fill="#fff"/><rect x="712.0" y="300.0" width="1.5" height="1.5" fill="#a4a4a4"/><rect x="713.5" y="301.5" width="1" height="1" fill="#fff"/><rect x="712.0" y="304.0" width="1.5" height="1.5" fill="#a4a4a4"/><rect x="713.5" y="305.5" width="1" height="1" fill="#fff"/><rect x="716.0" y="288.0" width="1.5" height="1.5" fill="#a4a4a4"/><rect x="717.5" y="289.5" width="1" height="1" fill="#fff"/><rect x="716.0" y="292.0" width="1.5" height="1.5" fill="#a4a4a4"/><rect x="717.5" y="293.5" width="1" height="1" fill="#fff"/><rect x="716.0" y="296.0" width="1.5" height="1.5" fill="#a4a4a4"/><rect x="717.5" y="297.5" width="1" height="1" fill="#fff"/><rect x="716.0" y="300.0" width="1.5" height="1.5" fill="#a4a4a4"/><rect x="717.5" y="301.5" width="1" height="1" fill="#fff"/><rect x="716.0" y="304.0" width="1.5" height="1.5" fill="#a4a4a4"/><rect x="717.5" y="305.5" width="1" height="1" fill="#fff"/></svg>
<div style="position:absolute;left:712px;top:53px;width:10px;height:30px;background:#efefef;border-right:1px solid #a0a0a0;border-bottom:2px solid #8c8c8c;border-top:2px solid #9c9c9c;border-radius:0 4px 4px 0;box-sizing:border-box;"></div>
<div style="position:absolute;left:712px;top:81px;width:10px;height:36px;background:#efefef;border-right:1px solid #a0a0a0;border-bottom:2px solid #8c8c8c;border-top:2px solid #8c8c8c;border-radius:0 4px 4px 0;box-sizing:border-box;"></div>
</body></html>
